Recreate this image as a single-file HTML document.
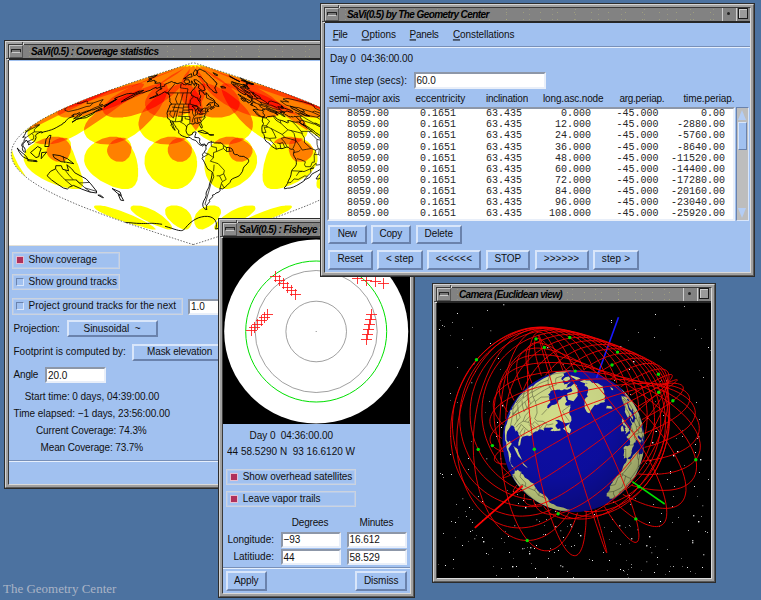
<!DOCTYPE html><html><head><meta charset="utf-8"><title>SaVi</title><style>
html,body{margin:0;padding:0}
body{width:761px;height:600px;overflow:hidden;background:#4c72a0;font-family:"Liberation Sans", Arial, Helvetica, sans-serif;position:relative}
.abs{position:absolute}
.win{position:absolute;box-sizing:border-box;border:1px solid #2c2c2c;background:#a0a0a0;overflow:hidden}
.fr1{position:absolute;left:0;top:0;right:0;bottom:0;border:1px solid;border-color:#d4d4d4 #5a5a5a #5a5a5a #d4d4d4;padding:2px}
.fr2{position:relative;width:100%;height:100%;box-sizing:border-box;border:1px solid;border-color:#3a3a3a #dadada #dadada #3a3a3a}
.nt{position:absolute;background:#444;box-shadow:1px 1px 0 #ddd}
.title{position:relative;height:13px;background:radial-gradient(circle,rgba(200,200,120,.4) .5px,transparent .9px) 3px 1px/17px 7px,radial-gradient(circle,rgba(200,200,120,.3) .5px,transparent .9px) 9px 4px/23px 5px,#828282;border-bottom:2px solid #262626;overflow:hidden;white-space:nowrap}
.tmenu{position:absolute;left:0;top:0;width:14px;height:13px;box-sizing:border-box;border:1px solid;border-color:#c8c8c8 #555 #555 #c8c8c8;background:#8a8a8a}
.tmenu i{position:absolute;left:2px;top:4px;width:8px;height:2px;background:#777;border:1px solid #222;border-bottom-color:#ccc;border-radius:1px;box-sizing:content-box;margin:-1px 0 0 -1px}
.tt{position:absolute;left:22px;top:-0.5px;font:italic bold 10px/14px "Liberation Sans", Arial, Helvetica, sans-serif;color:#000}
.tbtn{position:absolute;top:0;width:14px;height:13px;box-sizing:border-box;border-left:1px solid #cfcfcf;background:#828282}
.tbtn.min{right:14px} .tbtn.max{right:0}
.tbtn.min i{position:absolute;left:4px;top:4px;width:3px;height:3px;border-radius:2px;background:#222}
.tbtn.max i{position:absolute;left:1px;top:0px;width:8px;height:9px;border:1px solid #1a1a1a;background:#9a9a9a;box-shadow:inset 1px 1px 0 #ccc}
.content{position:relative;background:#a1c1f0;overflow:hidden}
.content>div,.content>span,.content>pre{position:absolute;box-sizing:border-box}
.t{white-space:nowrap;line-height:14px;color:#101010}
.btn{border:2px solid;border-color:#d9e6fa #6a82ac #6a82ac #d9e6fa;background:#a1c1f0}
.chk{border:1px solid #ccd3de;background:#a1c1f0;box-shadow:inset 0 0 0 1px #b4cbef}
.ind{border:1px solid;border-color:#6a82ac #d9e6fa #d9e6fa #6a82ac;background:#a1c1f0}
.ind.on{background:#b0305a;border-color:#e6c0d0 #e6c0d0 #e6c0d0 #e6c0d0}
.entry{border:2px solid;border-color:#8d97a8 #e9eff9 #e9eff9 #8d97a8;background:#fff}
.sep{background:#e6effc;border-top:1px solid #7890b8;height:2px !important}
.row{height:12px;font:10px/12px "Liberation Mono","DejaVu Sans Mono",monospace;color:#262626;white-space:pre}
.row span{position:absolute;top:0}
.trough{background:#bdbdbd;border:1px solid;border-color:#6a82ac #d9e6fa #d9e6fa #6a82ac}
.thumb{position:absolute;left:1px;top:14px;width:9px;height:28px;background:#a1c1f0;border:1px solid;border-color:#d9e6fa #6a82ac #6a82ac #d9e6fa;box-sizing:border-box}
.arr{position:absolute;left:1px;width:0;height:0;border-left:4.5px solid transparent;border-right:4.5px solid transparent}
.arr.up{top:2px;border-bottom:10px solid #b4cdf4}
.arr.dn{bottom:2px;border-top:10px solid #b4cdf4}
.gc{position:absolute;left:3px;top:581px;font:13px/16px "Liberation Serif","Times New Roman",serif;color:#aab4c6;white-space:nowrap}
</style></head><body><div class="win" style="left:4px;top:40px;width:380px;height:449px"><div class="fr1"><div class="fr2"><div class="nt" style="left:13px;top:-3px;width:1px;height:3px"></div><div class="nt" style="left:-3px;top:13px;width:3px;height:1px"></div><div class="title"><div class="tmenu"><i></i></div><span id="t50" class="tt" style="left:22px;letter-spacing:-0.483px">SaVi(0.5) : Coverage statistics</span><div class="tbtn min"><i></i></div><div class="tbtn max"><i></i></div></div><div class="content" style="height:424px"><div class="" style="left:0px;top:1px;width:370px;height:185px;background:#fff;border-bottom:1px solid #e6e2d6"><svg class="abs" style="left:0;top:0" width="370" height="184" viewBox="0 0 370 184"><path d="M282.8,145.1 281.5,144.4 276.1,144.4 275.8,144.8 272.1,145.1 262.1,147.8 254.5,150.4 242.5,155.4 231.1,161.1 224.1,165.4 221.5,168.1 221.8,168.4 225.1,168.4 230.1,167.1 231.5,167.1 237.8,165.1 240.1,164.8 242.5,163.8 243.5,163.8 257.8,159.1 270.5,154.1 278.5,150.1 280.5,148.8 282.8,146.4ZM246.1,145.8 245.5,145.1 243.5,144.4 236.1,144.8 229.5,146.8 222.8,149.8 214.1,155.4 208.1,161.1 205.5,165.1 205.1,166.1 205.5,168.1 206.1,168.4 209.5,168.4 212.1,167.8 223.1,163.8 233.5,158.8 240.5,154.4 245.5,149.8 246.5,148.1ZM209.8,146.1 205.8,144.4 200.1,144.4 195.5,145.8 190.5,148.8 186.8,153.1 185.1,158.1 185.5,162.4 187.1,166.1 189.5,168.1 193.8,168.4 199.8,165.8 204.5,162.4 209.1,157.8 211.8,152.8 212.1,151.4 211.8,148.8ZM157.1,147.1 156.1,148.8 156.5,153.4 158.8,157.4 164.1,162.8 168.5,165.8 172.5,167.8 174.8,168.4 178.1,168.4 179.5,167.8 181.1,166.1 182.8,162.4 182.8,157.1 181.5,153.4 180.1,151.4 177.5,148.8 172.5,145.8 167.8,144.4 162.1,144.4 158.1,146.1ZM121.8,145.8 121.5,147.8 122.5,149.8 127.1,154.1 133.5,158.1 145.1,163.8 156.1,167.8 158.8,168.4 162.1,168.4 163.1,167.8 163.1,166.1 161.8,163.4 159.5,160.4 153.1,154.8 145.8,150.1 138.5,146.8 131.8,144.8 124.1,144.4ZM85.1,145.1 85.1,146.4 87.1,148.4 90.1,150.4 96.8,153.8 105.8,157.4 121.5,162.8 122.5,162.8 124.8,163.8 134.1,166.1 135.5,166.8 143.1,168.4 146.5,168.4 146.8,168.1 144.1,165.4 136.5,160.8 124.1,154.8 110.8,149.4 95.8,145.1 94.1,145.1 91.8,144.4 86.5,144.4ZM2.8,88.4 2.5,94.8 3.1,98.1 5.1,102.8 8.8,108.1 15.5,114.8 17.8,116.4 16.8,115.4 9.1,103.4 4.8,94.4ZM13.8,72.1 18.8,69.4 19.1,70.1 18.5,71.8 18.5,73.4 19.5,76.4 21.8,79.1 25.8,81.4 25.1,82.4 21.1,85.1 17.8,88.4 16.5,90.4 14.8,94.4 14.8,99.4 16.8,104.1 18.5,106.4 22.8,110.8 26.8,113.8 32.8,117.4 38.8,120.4 46.8,123.8 52.8,125.8 63.1,128.1 69.5,128.1 72.1,127.1 74.1,124.4 74.1,119.8 73.1,115.4 68.8,102.8 68.1,101.8 64.1,90.4 62.1,86.4 61.8,81.8 61.1,80.1 59.5,78.1 60.1,77.4 61.5,77.1 67.8,73.8 74.8,69.4 75.5,72.4 77.8,76.4 80.8,79.1 85.5,81.4 84.8,82.4 82.8,83.8 79.1,87.4 77.5,89.8 75.5,94.4 75.1,100.1 76.1,103.8 77.8,107.1 80.8,111.1 83.8,114.1 91.5,119.8 103.8,125.8 112.8,128.1 119.1,128.1 123.1,126.8 126.1,124.1 128.5,119.1 128.8,115.8 129.1,115.4 129.1,107.1 128.8,106.8 128.8,104.4 127.5,98.1 125.5,92.1 122.5,86.4 121.8,82.8 120.1,79.8 118.1,78.1 125.8,73.4 130.8,69.4 133.8,74.1 136.1,76.4 140.5,79.4 143.8,80.8 145.1,81.8 139.8,87.1 136.8,92.4 135.8,95.4 135.5,102.8 136.8,107.8 138.8,111.8 143.1,117.4 149.5,122.8 154.8,125.8 162.5,128.1 168.8,128.1 173.5,126.8 178.5,123.8 181.8,120.4 183.8,117.8 185.8,114.1 187.1,110.4 188.1,105.1 188.1,100.1 187.8,99.8 187.5,96.1 186.1,92.1 184.1,88.1 182.8,86.4 182.5,84.8 181.1,82.1 178.1,78.8 176.8,78.1 182.8,73.8 186.8,69.4 191.8,74.4 194.5,76.4 201.8,80.4 204.1,81.1 204.8,81.8 202.1,84.4 199.8,87.8 196.8,94.1 195.5,99.8 195.5,108.1 197.1,114.8 199.5,119.4 201.5,122.1 205.8,125.8 208.5,127.1 212.1,128.1 218.5,128.1 221.8,127.4 226.5,125.8 231.1,123.4 238.5,118.1 241.5,115.1 245.1,110.1 246.8,106.8 248.1,101.8 247.8,95.1 245.5,89.4 243.1,86.4 241.1,82.4 238.5,79.8 235.8,78.1 236.1,77.4 239.5,74.8 241.5,72.1 242.8,69.4 248.5,73.8 252.8,76.4 259.5,79.8 263.8,81.1 264.5,81.8 261.1,86.1 257.5,94.1 254.8,103.4 254.1,109.1 253.8,109.4 253.8,112.4 253.5,112.8 253.8,119.8 255.5,124.1 258.1,126.8 261.8,128.1 268.1,128.1 273.1,127.1 281.8,124.1 288.8,120.8 298.5,114.4 302.5,110.8 306.5,105.4 308.5,100.1 308.5,95.4 307.5,92.1 306.5,90.1 303.1,86.1 301.5,83.1 298.1,80.1 294.5,78.1 297.5,74.4 298.5,71.8 298.5,69.8 298.8,69.4 304.8,73.1 313.1,77.4 324.1,81.8 322.8,83.4 320.8,87.4 316.8,97.4 316.5,99.1 308.1,119.1 307.5,121.8 307.5,124.8 308.1,126.4 310.1,127.8 311.5,128.1 317.8,128.1 324.8,126.8 337.5,122.8 350.1,117.1 353.1,114.8 361.1,106.4 364.5,100.8 366.1,94.8 365.8,88.4 359.8,81.8 356.8,79.8 353.1,78.1 354.8,75.4 355.1,72.4 353.1,70.4 346.1,65.1 339.5,60.8 329.5,55.1 319.5,50.1 318.8,50.1 303.8,43.1 274.8,31.8 256.1,25.4 255.1,24.8 191.8,4.1 189.8,4.1 189.5,4.4 189.1,4.1 187.1,4.1 186.8,4.4 186.5,4.1 184.5,4.1 184.1,4.4 183.8,4.1 182.1,4.1 181.8,4.4 181.1,4.1 179.5,4.1 179.1,4.4 178.8,4.1 176.8,4.1 113.5,24.8 112.5,25.4 106.8,27.1 105.8,27.8 101.1,29.1 100.1,29.8 83.1,35.8 60.1,45.1 39.1,55.1 32.5,58.8 22.5,65.1Z" fill="#ffff00" fill-rule="evenodd"/><path d="M324.1,81.4 330.8,83.1 339.5,83.4 340.1,85.1 340.1,88.1 340.8,91.1 343.1,96.8 345.8,99.4 348.8,100.8 353.5,100.8 356.8,99.8 359.5,98.4 363.1,95.1 364.5,92.4 364.8,89.4 363.8,86.4 358.1,82.1 352.1,79.1 353.1,78.1 348.8,76.8 344.5,76.8 340.5,75.8 333.1,75.8 328.5,77.4 326.1,79.1ZM264.8,81.4 266.1,82.1 270.8,83.1 279.8,83.4 280.1,83.8 279.8,84.1 279.8,89.4 281.1,94.1 283.5,97.8 285.5,99.4 287.5,100.4 293.5,100.8 297.5,99.4 301.8,96.1 303.8,92.4 304.1,88.4 303.5,86.4 299.5,82.8 293.1,79.1 294.1,78.1 291.8,77.1 286.1,76.8 282.5,75.8 275.1,75.8 269.8,77.4 267.1,79.1ZM205.1,81.4 209.1,82.8 213.1,83.1 213.5,83.4 219.8,83.4 220.1,83.8 219.5,85.4 219.5,91.1 220.5,94.1 222.1,96.8 223.8,98.4 227.5,100.4 233.5,100.8 237.8,99.1 241.5,95.8 243.5,91.4 243.5,87.4 242.5,85.4 238.8,82.1 234.1,79.1 235.5,78.1 233.1,77.1 227.8,76.8 224.1,75.8 217.1,75.8 210.5,77.8ZM145.5,81.4 151.1,83.1 159.8,83.4 160.1,83.8 158.8,87.1 158.8,90.8 159.5,93.1 161.1,96.1 163.5,98.4 168.5,100.8 173.5,100.8 177.5,99.1 181.1,95.4 182.8,91.4 182.8,86.4 178.8,81.8 175.1,79.1 176.8,78.1 174.8,77.1 169.5,76.8 166.1,75.8 158.8,75.8 151.8,77.8ZM86.1,81.4 86.1,81.8 91.1,83.1 99.8,83.4 100.1,83.8 98.8,86.1 98.1,88.4 98.1,90.8 98.8,93.1 99.8,95.1 101.8,97.4 104.1,99.1 107.1,100.4 113.5,100.8 116.1,99.8 120.1,96.1 122.1,91.4 122.5,86.1 119.8,82.4 116.1,79.1 117.8,77.8 115.1,76.8 111.1,76.8 107.8,75.8 100.8,75.8 93.1,77.8ZM26.5,81.4 26.5,81.8 31.5,83.1 39.8,83.4 40.1,83.8 37.8,87.8 37.5,90.4 38.1,93.1 39.5,95.4 41.8,97.8 43.8,99.1 47.1,100.4 53.1,100.8 56.5,99.4 59.1,96.8 61.5,91.4 62.1,86.1 59.8,82.1 57.1,79.1 59.1,78.1 57.8,77.1 52.8,76.8 49.8,75.8 42.8,75.8 34.5,77.8ZM19.1,69.4 49.1,54.4 49.8,54.4 52.1,55.8 55.1,56.4 65.1,56.4 65.5,56.1 67.8,56.1 68.1,55.8 70.1,55.8 75.5,54.8 85.1,52.1 85.8,52.4 79.8,58.1 76.8,62.4 75.1,67.1 75.1,69.4 97.5,54.4 101.1,55.8 104.5,56.4 114.1,56.4 114.5,56.1 116.8,56.1 122.1,55.1 131.8,52.1 132.5,52.4 130.8,55.8 129.5,61.4 129.5,64.1 130.8,69.4 133.8,67.1 141.8,59.1 145.5,54.4 149.8,55.8 153.5,56.1 153.8,56.4 163.5,56.4 171.8,54.8 178.5,52.1 179.1,52.4 179.5,55.1 181.1,60.4 183.1,64.4 186.8,69.4 189.1,66.4 191.5,62.1 193.8,54.4 202.8,56.4 212.8,56.4 220.8,54.4 225.1,52.1 226.1,52.8 230.8,58.4 237.1,64.8 242.8,69.4 243.8,65.8 243.8,61.1 242.5,56.4 241.8,55.4 242.1,54.4 252.1,56.4 261.8,56.4 268.1,54.8 270.8,53.1 271.5,52.1 272.1,52.1 286.8,62.1 298.5,69.4 298.5,67.1 296.1,61.8 294.5,59.4 289.8,54.8 290.1,54.4 298.5,56.1 301.1,56.1 301.5,56.4 311.1,56.4 315.8,55.1 317.5,53.8 318.1,52.1 318.8,52.1 328.1,56.8 328.8,56.8 346.8,65.8 336.1,58.8 319.5,50.1 318.8,50.1 315.1,48.1 299.8,41.4 274.8,31.8 256.1,25.4 255.1,24.8 193.1,4.4 195.8,5.8 195.5,6.1 190.1,4.4 191.8,6.1 191.1,6.4 187.1,4.4 186.8,5.1 187.1,6.4 186.8,6.8 184.5,4.4 181.8,6.4 181.5,6.1 181.5,4.4 177.5,6.1 177.1,5.8 178.1,4.4 174.5,5.8 173.5,5.4 174.5,4.8 170.1,6.4 169.1,6.4 113.5,24.8 112.5,25.4 93.8,31.8 68.8,41.4 53.5,48.1 49.8,50.1 49.1,50.1 32.5,58.8 21.1,66.1ZM195.5,6.1 195.8,5.8 196.5,6.1 196.1,6.4ZM172.8,5.8 173.1,5.4 173.8,5.8 173.5,6.1Z" fill="#ff8000" fill-rule="evenodd"/><path d="M352.1,79.1 345.5,76.8 343.5,77.1 342.1,77.8 340.8,79.4 339.8,83.4 344.1,82.8 347.5,81.8ZM293.1,79.1 286.8,76.8 284.8,77.1 283.5,77.8 280.8,80.8 280.1,83.4 280.5,83.1 282.8,83.1 288.8,81.4ZM233.8,79.1 228.5,76.8 226.5,77.1 223.8,78.4 221.5,80.8 220.1,83.4 227.1,82.1 230.8,80.8ZM174.8,79.1 170.1,76.8 167.8,77.1 163.5,79.4 160.1,83.4 167.5,82.1 171.5,80.8ZM115.8,79.1 111.8,76.8 109.5,77.1 107.5,77.8 103.5,80.1 100.5,83.4 100.8,83.1 103.1,83.1 107.8,82.1ZM56.8,79.1 54.1,77.1 53.1,76.8 50.8,77.1 47.1,78.4 44.1,80.1 40.5,83.4 40.8,83.1 43.5,83.1 49.5,81.8ZM48.5,52.8 49.5,54.1 51.1,53.8 58.8,49.8 59.5,49.8 78.1,40.8 117.1,27.8 117.5,28.1 111.1,31.4 102.5,37.1 96.5,42.8 94.8,45.8 93.8,46.8 86.5,51.8 93.8,49.4 94.8,52.1 97.1,54.1 98.1,54.1 115.8,41.1 126.5,36.1 127.1,36.1 144.1,27.4 144.5,27.8 139.5,33.4 136.8,38.4 136.1,41.1 136.1,44.4 136.8,46.1 134.8,48.4 132.8,51.8 138.5,49.4 140.8,51.8 144.8,54.1 145.8,54.1 150.5,47.8 154.1,41.1 162.8,34.8 170.8,26.8 171.1,27.1 170.8,27.8 170.8,31.1 171.1,31.4 171.5,34.8 174.1,40.8 178.8,46.1 178.8,51.1 179.1,51.8 183.1,49.4 189.1,52.8 192.8,54.1 193.5,54.1 193.8,53.4 193.8,47.1 192.5,40.8 194.1,38.4 195.8,34.1 196.5,31.1 196.5,27.4 196.8,27.1 202.5,33.1 207.1,37.1 215.1,42.8 220.8,45.8 225.1,51.8 226.1,51.4 228.1,49.4 234.1,52.1 241.5,54.4 238.8,49.8 236.1,46.4 230.5,40.8 229.8,37.4 228.1,34.1 225.5,30.4 222.5,27.4 222.8,27.1 243.5,37.8 244.1,37.8 253.1,42.1 263.5,46.1 271.5,51.8 272.1,51.4 272.8,49.4 279.5,51.8 289.5,54.4 280.1,47.4 272.8,43.1 269.1,41.4 262.8,35.8 254.5,30.4 250.1,28.1 250.5,27.8 291.1,41.8 292.1,41.8 297.5,43.8 298.5,43.8 305.8,46.1 317.8,51.8 318.1,51.4 317.5,49.8 317.8,49.4 318.5,49.8 299.8,41.4 267.5,29.1 262.8,27.8 260.8,26.8 252.8,24.8 251.5,24.8 243.1,22.8 237.8,22.4 235.5,21.1 220.8,15.1 200.5,7.8 213.1,13.4 234.1,21.8 235.8,22.1 236.1,22.4 235.5,23.4 235.8,24.4 238.5,27.4 238.1,27.8 224.5,23.4 219.1,22.4 216.8,22.4 214.1,20.1 206.8,15.1 192.8,7.1 205.1,16.4 214.8,22.4 213.1,23.4 212.5,24.4 212.1,27.4 212.5,27.8 212.1,28.1 207.1,25.4 202.1,23.4 197.8,22.4 195.8,22.4 192.8,15.1 187.1,7.1 187.5,9.8 188.8,14.1 191.1,19.1 193.5,22.4 193.1,22.8 190.8,23.4 188.8,24.8 185.5,28.1 182.5,25.1 180.5,23.8 174.5,22.1 176.5,19.4 178.5,15.8 180.5,10.8 181.1,7.4 175.8,14.1 172.8,19.8 171.8,22.8 170.8,22.8 165.1,24.8 159.1,28.1 157.8,23.8 156.1,22.8 153.5,22.1 168.1,12.8 175.5,7.1 162.8,14.1 150.1,22.8 143.8,24.1 132.8,27.8 132.5,27.4 133.8,26.1 135.1,23.8 134.5,22.8 132.8,22.4 132.5,22.1 132.8,21.8 143.1,18.1 162.1,10.4 167.8,7.8 145.5,15.8 128.8,22.8 120.8,24.1 108.8,27.1 107.5,27.8 106.8,27.8 106.5,27.4 106.8,27.1 105.8,27.8 101.1,29.1 100.1,29.8 83.1,35.8 64.8,43.1 49.8,50.1 49.1,50.1 48.5,51.1ZM249.5,27.8 249.8,27.4 250.5,27.8 250.1,28.1ZM117.1,27.8 117.5,27.4 118.1,27.8 117.8,28.1ZM117.8,27.4 118.1,27.1 118.8,27.4 118.5,27.8Z" fill="#ff4400" fill-rule="evenodd"/><path d="M270.8,30.4 293.5,40.8 294.1,40.8 297.1,42.4 297.8,42.4 300.8,44.1 301.5,44.1 304.5,45.8 317.1,49.4 317.1,49.1 299.8,41.4ZM212.5,28.4 214.1,34.1 217.1,40.1 220.5,45.4 221.5,46.4 228.1,49.4 230.5,45.1 230.5,43.4 230.8,43.1 230.5,40.8 222.5,34.4 217.5,31.1ZM131.5,28.4 115.8,34.8 101.8,41.8 94.5,46.1 93.8,49.4 105.5,45.4 116.5,40.8 125.1,34.1ZM104.5,28.4 97.5,30.4 96.5,31.1 93.8,31.8 80.5,37.1 78.8,37.4 52.8,48.4 63.8,45.4 66.1,44.4 67.1,44.4 76.8,41.1 77.8,41.1ZM239.1,28.1 246.8,34.4 263.1,46.1 272.8,49.4 272.1,45.8 270.1,42.4 268.8,41.1 255.8,34.8ZM185.5,28.1 182.5,32.8 179.8,39.8 178.8,46.1 183.1,49.4 186.8,47.1 192.5,41.1 191.1,37.1 189.1,33.1ZM158.8,28.1 147.8,35.4 144.1,38.4 137.1,45.4 136.8,46.8 138.5,49.4 146.5,45.8 154.5,40.8 156.8,35.8 158.1,31.8 158.5,28.4ZM236.8,22.4 236.8,22.8 246.1,26.1 238.5,22.4ZM215.1,22.8 221.5,26.4 217.1,22.4 215.5,22.4ZM193.5,22.8 196.5,26.8 195.8,22.4ZM174.5,22.4 171.8,22.8 171.1,26.4ZM152.8,22.4 150.1,22.8 145.5,26.8ZM131.5,22.4 128.5,22.8 121.5,26.1Z" fill="#ff1400" fill-rule="evenodd"/><path d="M205.5,44.6 205.7,40.5 207.0,42.5 209.1,43.6 210.0,45.4 207.7,45.1 205.5,44.6M166.7,21.8 168.0,22.8 171.2,21.8 172.2,21.8 173.7,22.3 174.8,23.8 175.3,23.5 176.7,23.8 177.6,23.3 178.4,23.0 179.8,23.8 181.3,23.3 182.0,24.3 182.3,23.3 182.9,22.3 182.3,21.3 182.4,20.0 182.9,19.8 183.3,20.8 183.6,21.8 184.1,22.8 185.0,23.3 185.1,24.3 185.7,24.3 185.9,22.3 187.1,22.0 187.4,23.3 187.5,24.9 186.7,25.7 185.9,25.9 185.8,27.4 185.2,27.9 184.1,28.4 183.1,29.9 182.3,30.9 181.8,32.9 182.7,33.4 182.9,35.0 184.3,35.0 185.4,35.7 187.2,36.7 188.6,36.8 189.2,39.0 189.9,40.0 190.9,40.5 191.2,39.5 190.8,37.5 191.7,36.0 191.6,34.5 190.3,33.1 190.6,31.9 189.9,29.6 191.1,29.6 192.1,29.9 193.4,30.9 194.1,30.9 195.0,32.9 196.3,33.7 196.8,32.9 197.1,31.6 198.8,33.4 200.2,35.5 202.0,37.0 203.4,37.5 205.0,39.0 205.6,40.0 205.1,40.5 204.2,41.5 202.4,41.8 200.5,41.8 199.5,42.8 198.5,44.1 197.7,45.1 199.0,43.3 200.9,43.1 201.5,43.6 201.4,44.6 202.1,45.8 204.0,46.3 204.3,45.1 205.4,46.1 204.9,46.8 203.4,47.6 201.9,48.6 201.6,47.6 202.4,46.6 200.7,47.1 199.6,48.1 198.7,48.6 198.6,49.6 199.4,50.4 198.3,50.7 196.9,51.1 196.6,51.6 196.8,52.7 196.0,53.7 195.6,55.0 196.0,56.6 195.1,57.7 194.0,58.4 192.8,59.9 191.8,61.3 192.0,62.8 192.8,64.3 193.3,65.8 193.0,67.1 192.1,66.8 191.0,64.8 190.7,63.3 189.6,62.3 188.2,62.5 186.9,61.9 185.2,62.1 184.7,63.1 183.4,63.0 181.2,62.6 179.9,63.1 178.0,64.5 177.5,66.8 177.0,69.8 177.7,71.9 178.6,73.4 180.0,74.2 181.9,73.9 183.3,73.4 183.8,71.6 185.7,70.9 187.1,71.1 186.7,72.9 186.2,74.4 185.8,76.4 188.2,76.6 190.1,76.9 190.9,77.9 190.5,80.5 190.8,82.0 192.3,83.5 194.3,83.3 195.3,83.0 196.8,84.0 197.0,85.0 196.0,84.0 194.8,83.7 193.8,85.2 192.3,84.3 190.8,84.0 189.3,82.5 188.5,81.5 186.8,79.5 185.8,79.2 183.3,78.4 181.4,76.9 179.9,76.2 178.0,76.7 175.6,75.7 173.2,74.9 170.9,73.4 169.6,71.9 169.8,69.8 168.6,68.3 167.0,66.5 166.4,64.8 164.8,63.3 164.4,61.3 163.1,60.5 162.8,62.3 163.9,63.8 164.4,65.8 165.4,67.8 166.2,69.3 165.3,68.8 164.1,67.3 163.1,65.5 162.0,64.3 162.7,62.8 161.6,61.8 161.3,59.7 160.4,58.2 158.9,57.7 158.3,55.7 158.4,54.2 158.0,52.2 158.7,49.6 160.4,46.1 161.0,43.8 162.1,43.9 162.7,43.1 161.9,42.0 160.8,41.0 160.9,39.5 160.8,37.5 160.5,36.5 160.7,34.5 160.0,33.4 159.7,32.4 158.5,31.9 157.0,31.9 156.6,30.9 155.4,30.9 152.6,32.6 150.0,34.0 147.7,35.0 145.6,36.0 142.8,37.0 140.6,37.5 143.6,36.0 147.1,34.5 148.9,33.1 147.5,33.2 147.4,32.4 147.2,31.4 148.5,29.9 150.1,28.9 152.8,27.9 153.0,27.4 151.2,27.4 151.7,26.3 154.3,25.4 155.3,25.4 155.7,24.3 155.7,23.5 158.5,22.3 160.7,21.3 162.7,20.5 163.7,21.0 164.5,21.5 166.7,21.8M187.8,13.5 188.4,12.2 188.3,10.7 188.5,9.7 189.1,9.4 189.6,9.2 189.8,8.7 190.0,8.2 190.6,8.2 191.2,8.2 192.2,8.7 193.3,9.2 195.1,10.2 196.0,10.2 197.1,11.7 199.4,13.7 201.7,15.8 202.9,17.3 205.0,18.8 205.2,19.8 207.3,21.3 206.8,21.8 208.0,22.3 208.0,23.3 207.0,23.8 206.8,24.9 206.7,26.1 205.6,26.6 206.4,28.4 207.2,30.4 208.1,31.9 207.1,31.9 205.0,31.1 203.0,29.4 201.1,27.4 199.0,25.4 198.0,23.3 198.1,22.3 196.5,21.3 195.4,19.8 194.1,18.3 192.5,16.5 191.1,15.6 189.7,15.8 188.6,14.7 187.8,13.5M187.3,18.8 188.7,19.8 190.2,20.8 192.3,22.8 194.6,24.9 196.2,28.9 193.8,29.9 191.5,28.4 189.4,26.9 190.0,23.8 187.9,22.8 186.0,21.8 184.9,18.8 186.1,18.8 187.3,18.8M176.0,18.8 177.3,18.8 178.6,18.8 179.9,18.8 180.8,21.8 179.0,22.3 177.1,22.8 176.0,21.8 175.1,20.8 176.0,18.8M184.3,11.7 185.1,10.7 185.7,9.7 186.1,8.7 186.8,9.0 187.5,9.4 188.2,9.7 188.2,11.0 187.9,12.4 187.5,13.7 186.6,14.1 185.7,14.4 184.8,14.7 184.3,11.7M174.5,17.8 177.5,15.8 178.8,14.7 180.1,13.7 181.3,13.2 182.4,12.7 183.1,15.8 181.8,16.0 180.5,16.3 179.1,16.8 177.5,17.3 176.1,17.5 174.5,17.8M197.0,85.0 198.3,83.5 199.2,81.7 201.2,81.2 202.4,80.2 202.7,81.5 204.1,81.0 205.7,82.0 208.2,81.9 210.1,82.0 212.1,81.8 213.2,83.0 214.3,84.0 215.9,85.5 217.5,86.5 219.5,86.5 221.5,87.0 223.1,88.0 224.2,90.6 224.7,92.6 226.3,93.6 228.3,93.6 230.3,95.1 232.8,95.4 234.8,95.4 236.7,96.6 238.7,97.7 239.6,99.2 239.6,100.7 238.6,102.2 236.8,104.2 235.0,105.7 234.1,107.8 233.5,110.3 231.8,112.8 230.2,114.8 228.0,115.9 225.9,116.7 223.8,117.6 222.0,118.9 221.0,121.4 218.5,123.9 216.7,125.5 214.9,127.0 213.3,128.0 211.8,127.5 210.9,127.0 211.1,129.5 209.7,131.2 207.1,132.0 205.6,133.5 203.4,134.1 203.7,135.6 202.1,137.6 200.1,139.1 200.7,140.6 199.1,142.6 197.7,144.2 197.5,145.7 197.1,148.0 198.2,148.2 196.4,148.5 195.0,147.2 194.1,145.7 193.7,143.2 194.6,140.1 196.3,137.1 197.2,134.6 197.1,132.0 198.1,129.5 200.0,126.0 200.5,122.9 202.0,118.9 202.8,114.8 203.2,111.3 201.7,109.8 198.9,108.3 197.6,106.2 196.7,104.2 195.3,101.2 194.3,99.2 193.1,97.7 194.1,95.6 193.4,93.6 194.4,92.1 195.4,91.1 195.9,89.6 197.1,88.6 196.9,86.5 197.0,85.0M253.3,56.2 252.1,55.4 250.7,55.0 249.8,55.2 248.6,53.7 247.8,53.5 246.3,51.1 244.0,49.1 244.2,48.4 246.3,48.6 247.8,48.7 249.1,48.7 248.1,47.4 246.7,46.1 244.6,44.9 242.3,44.2 241.4,43.6 242.2,43.3 243.3,43.4 242.0,42.3 242.7,42.7 243.5,42.5 243.5,41.8 242.7,41.1 243.1,40.7 242.8,40.0 242.0,39.0 242.2,38.6 242.6,38.4 243.4,38.4 242.6,37.7 241.1,36.7 239.8,36.0 238.4,35.0 238.8,34.8 238.6,34.3 240.3,35.5 241.5,36.5 243.8,37.7 244.6,37.8 245.2,37.6 246.4,38.1 246.8,37.7 247.5,37.2 248.8,37.6 248.7,37.0 245.8,35.2 244.9,34.5 246.4,34.9 245.3,33.8 243.1,32.7 243.8,32.4 244.7,32.3 245.1,32.0 243.3,31.4 242.4,31.6 241.6,32.0 239.5,31.2 237.1,29.9 235.1,28.7 234.4,27.9 233.4,26.9 232.5,26.3 231.3,26.1 231.3,26.4 232.7,27.4 233.8,28.6 234.8,29.6 236.8,30.9 238.0,31.4 239.6,32.1 240.6,33.1 242.2,34.5 243.9,35.8 243.4,36.0 243.4,36.6 241.7,35.5 239.3,34.3 237.0,32.9 236.2,32.6 236.2,33.1 236.5,34.0 234.9,33.4 232.3,31.9 230.1,30.4 229.2,29.6 229.0,29.0 228.6,28.3 228.3,27.7 227.7,26.9 226.5,25.9 224.9,24.7 223.7,23.6 223.2,23.0 222.4,22.1 222.5,21.7 222.4,21.3 222.3,20.8 223.1,20.8 225.6,21.6 228.1,22.4 230.0,22.8 234.2,24.0 236.5,25.1 236.7,25.7 234.7,25.4 233.5,25.2 237.5,26.9 240.4,27.9 240.0,27.4 239.9,26.9 237.8,25.9 237.7,25.5 239.0,25.7 236.3,24.3 233.9,23.3 235.4,23.6 238.2,24.9 237.5,24.2 237.3,23.8 237.3,23.3 238.3,23.5 238.3,23.1 238.7,22.8 237.0,22.0 239.3,22.5 241.7,23.0 243.8,23.6 239.4,22.1 236.0,20.8 232.1,19.1 232.9,19.0 237.0,20.5 241.7,22.3 245.0,23.3 241.2,21.8 235.5,19.8 235.2,19.5 236.8,19.8 236.1,19.3 233.3,18.3 233.4,17.8 230.6,16.8M139.0,16.2 142.1,15.6 144.2,15.2 148.3,14.1 147.2,14.7 146.2,15.6 143.3,16.8 140.0,17.8 139.7,18.1 140.6,18.3 142.9,18.1 140.8,19.3 138.2,20.8 140.3,20.3 141.6,20.3 144.8,19.3 145.9,19.5 145.8,20.3 145.8,20.8 147.4,20.8 145.7,22.1 147.1,22.3 149.4,22.0 150.1,21.8 151.5,22.0 151.7,22.8 151.7,23.8 151.6,25.1 151.5,25.9 149.7,26.6 148.0,27.4 147.1,27.1 147.2,26.4 145.8,26.9 144.5,27.4 141.1,29.4 138.7,30.1 136.3,30.9 133.9,31.9 132.0,31.9 129.1,32.9 126.6,34.2 123.8,36.0 121.4,37.2 117.7,38.8 114.8,40.0 112.2,41.0 114.7,39.0 118.1,37.0 121.8,35.0 124.3,34.0 127.9,32.4 132.7,30.4 134.6,29.4 131.7,30.1 130.1,30.2 125.3,32.4 122.9,32.9 122.6,32.2 119.8,32.6 117.6,32.9 111.9,35.0 106.3,37.0 105.6,38.0 107.0,38.0 105.8,39.0 102.8,40.5 98.4,43.1 93.6,45.1 88.9,47.1 84.1,48.9 82.6,48.9 80.1,49.8 77.2,51.1 73.6,52.4 71.2,54.7 68.6,56.7 66.7,57.2 64.6,57.8 66.0,56.7 68.7,55.2 68.3,54.5 71.2,52.7 71.4,52.2 70.5,51.6 67.2,53.2 66.0,53.0 63.8,53.7 62.8,54.9 64.8,54.7 65.2,55.2 62.0,56.2 59.5,57.2 57.5,59.2 55.9,61.3 53.8,62.3 53.4,63.3 51.3,64.3 47.8,66.3 44.9,67.8 42.4,68.8 39.7,69.6 37.8,70.2 34.7,70.9 32.6,72.1 33.3,70.9 32.0,70.8 29.3,72.1 27.2,73.4 26.6,74.9 27.1,76.4 26.2,78.9 25.1,80.7 22.7,82.0 21.3,83.0 19.4,83.8 19.8,82.5 18.8,81.9 18.6,80.5 17.6,79.8 17.1,79.1 15.9,81.0 14.2,82.5 13.8,84.0 14.2,85.5 15.4,86.5 16.2,88.6 16.1,90.1 16.7,91.2 15.5,91.1 13.9,89.8 13.4,87.5 13.8,86.2 12.6,84.5 13.3,82.5 14.9,80.5 15.4,78.4 16.7,76.4 15.6,75.9 13.7,76.4 15.3,74.4 16.4,72.6 16.5,71.4 17.6,70.1 16.9,69.6M352.3,70.6 350.8,70.9 352.0,72.1 351.1,72.9 351.1,74.4 351.3,75.9 350.1,76.7 351.4,78.9 352.5,81.0 352.8,83.0 352.3,84.0 351.8,84.4 350.3,83.0 348.2,80.8 346.2,78.9 343.5,76.4 340.6,73.9 338.0,71.4 337.2,70.9 336.4,71.7 333.0,70.1 331.1,68.8 328.5,67.6 325.6,67.1 323.0,67.2 320.4,66.9 318.3,66.5 316.3,65.3 314.9,65.7 312.1,64.8 309.2,63.5 306.9,62.3 305.5,62.0 305.7,62.8 308.2,64.3 310.8,65.6 312.2,66.8 314.0,67.8 313.1,66.5 315.3,68.1 317.1,68.1 317.1,66.8 317.3,66.3 319.1,67.8 321.8,68.6 324.2,69.8 324.8,71.4 325.6,73.4 324.9,74.6 324.3,75.4 322.7,76.2 320.5,78.1 319.1,79.2 317.4,79.7 316.0,79.8 314.3,77.9 312.9,75.9 309.7,73.6 306.5,71.6 304.2,69.3 301.6,67.8 298.8,65.8 295.9,64.3 294.3,63.0 295.3,64.3 293.9,63.8 291.7,62.4 290.1,61.1 291.6,61.0 290.5,59.4 288.8,57.5 287.4,56.2 286.3,55.4 285.1,55.4 284.4,56.1 282.0,55.5 281.4,56.0 279.3,55.3 277.7,54.2 276.2,53.5 275.4,52.7 274.3,52.2 274.8,51.8 275.8,51.6 275.0,51.0 276.6,50.8 277.1,50.1 278.4,50.1 280.5,50.8 282.4,51.1 283.9,51.1 283.7,50.5 282.2,49.5 279.6,48.6 277.3,47.8 275.2,47.1 272.2,45.4 273.9,45.8 273.1,44.9 272.2,45.1 271.9,45.9 272.9,46.6 274.4,46.9 274.5,47.4 273.5,47.6 271.2,46.6 271.0,46.1 269.1,45.6 268.6,45.8 269.6,46.9 270.2,47.8 271.8,49.3 272.8,50.1 274.7,50.9 273.6,51.1 273.4,51.4 271.8,51.2 272.4,52.2 271.2,51.8 272.6,52.9 274.9,54.0 274.7,54.5 276.2,55.7 275.2,55.4 273.3,54.5 271.5,53.2 268.5,51.6 267.0,50.4 265.2,49.6 262.4,48.6 259.8,47.4 258.5,46.8 257.7,46.5 257.1,46.8 258.5,47.9 260.4,48.6 262.5,49.8 264.2,50.3 267.1,51.4 268.1,52.0 266.6,51.6 267.4,52.7 268.5,53.2 268.8,54.2 268.5,54.2 267.6,53.2 266.0,52.2 264.4,51.4 261.9,50.6 259.6,49.6 257.5,48.4 255.7,47.7 255.5,48.3 255.2,49.0 253.7,48.7 253.0,48.9 254.3,50.1 254.2,50.8 253.9,51.6 254.3,52.7 255.3,53.4 255.6,54.4 255.5,55.4 253.6,55.5 253.3,56.2M253.3,56.4 257.0,57.0 258.3,55.7 261.2,55.4 264.0,55.0 265.9,55.2 266.8,56.7 268.5,58.2 270.2,59.0 272.8,59.5 274.8,60.2 278.4,61.8 279.6,61.3 278.5,59.7 280.6,59.6 283.2,60.5 286.6,61.3 288.0,61.0 289.7,61.0 291.9,62.6 296.0,65.3 300.2,68.3 303.6,70.9 306.0,73.4 308.2,74.9 310.6,77.1 312.8,78.4 315.6,80.0 316.4,81.0 318.4,81.8 320.2,81.3 322.0,81.0 324.1,80.7 324.5,82.0 324.3,85.5 323.4,88.0 321.7,90.3 319.3,92.6 317.2,94.6 315.4,96.6 314.0,98.7 313.8,101.2 313.5,103.2 312.9,105.7 311.5,108.3 308.2,110.3 305.2,111.8 302.7,113.3 300.7,116.4 296.6,118.4 294.4,120.4 291.2,122.4 287.8,124.4 284.4,126.0 281.1,127.0 278.4,127.2 275.6,127.8 275.1,127.0 276.9,125.0 278.5,122.4 279.3,119.9 281.2,116.4 282.0,113.8 282.4,110.8 283.2,108.8 286.5,105.2 287.4,103.2 287.3,101.2 287.0,98.2 285.3,95.6 284.4,93.4 284.9,91.6 285.1,89.6 283.9,88.0 282.1,88.3 280.5,87.5 279.3,86.2 277.3,86.2 275.8,86.7 273.0,87.7 270.9,87.3 268.9,87.7 267.3,88.2 265.3,87.0 263.1,85.5 261.3,84.0 260.5,82.5 258.7,81.5 256.7,80.0 256.1,78.4 255.2,77.7 255.6,75.9 254.8,73.4 253.2,71.4 252.9,68.8 252.9,66.8 253.2,64.6 254.1,63.8 254.5,62.5 253.5,60.8 253.2,58.9 253.9,58.0 253.3,56.4M38.1,114.8 42.5,118.9 48.1,122.9 54.4,127.0 58.4,128.0 60.5,126.0 64.5,124.4 72.5,128.0 80.7,131.0 87.6,132.0 87.4,130.0 81.8,122.9 77.1,117.9 65.8,111.8 62.7,107.8 57.8,103.7 59.6,109.8 53.7,108.3 52.3,104.7 46.8,104.7 46.6,107.8 41.6,110.3 39.7,112.6 38.1,114.8M239.1,42.0 240.2,41.7 241.0,41.3 242.1,40.8 241.3,40.4 240.5,39.3 239.2,39.0 238.2,38.3 236.3,37.4 234.6,36.3 233.5,36.0 232.1,34.5 231.0,34.3 230.0,33.3 229.1,33.3 230.1,34.5 232.1,36.0 233.7,37.0 234.8,37.2 236.6,38.5 236.1,38.8 237.4,39.7 237.3,40.2 238.9,40.6 238.7,41.0 239.1,42.0M234.1,40.0 236.6,40.0 233.0,37.0 231.9,37.5 234.1,40.0M212.5,26.9 214.6,26.9 216.8,26.9 214.5,25.4 211.7,25.4 212.5,26.9M63.0,61.3 67.8,58.2 73.3,57.2 77.3,56.7 84.4,52.7 86.6,50.6 93.4,48.1 92.1,47.1 83.2,52.2 76.1,55.2 67.8,58.2 63.0,61.3M307.1,117.9 309.8,117.9 315.5,113.3 320.4,108.8 321.8,104.7 314.5,108.8 309.0,114.8 307.1,117.9M103.1,127.5 111.0,131.0 112.4,134.6 108.1,132.0 103.1,127.5M109.3,133.5 112.2,135.1 114.7,139.6 111.6,139.1 109.3,133.5M8.2,87.0 12.0,90.8 16.6,94.6 19.4,98.7 13.7,95.6 10.4,91.3 8.2,87.0M21.5,91.6 27.0,96.6 29.8,95.6 30.6,91.6 32.2,87.5 28.7,85.5 21.5,91.6M18.7,99.7 23.4,100.2 28.1,100.7 27.7,99.7 23.6,99.2 19.4,98.7 18.7,99.7M32.2,97.7 33.9,95.6 37.7,91.1 32.7,91.6 32.2,97.7M43.8,93.6 50.9,94.6 58.4,97.7 64.8,102.7 57.3,101.2 52.1,100.7 45.1,96.6 43.8,93.6M40.1,74.4 42.0,74.4 40.5,79.5 39.8,85.5 35.8,85.5 37.1,78.4 40.1,74.4M353.8,83.0 356.7,85.0 355.8,86.5 354.2,84.5 353.8,83.0M189.0,70.4 193.6,69.3 199.5,72.4 195.7,72.4 189.0,70.4M199.6,73.4 204.9,73.9 201.6,74.4 199.6,73.4M108.2,38.0 101.8,42.0 95.1,46.1 101.1,42.0 108.2,38.0M231.0,20.8 225.3,17.8 222.9,16.3 220.2,14.7 220.7,15.2 221.0,15.8 226.9,18.8 231.0,20.8M205.7,13.7 204.9,12.7 204.0,11.7 208.5,13.7 208.5,14.2 208.4,14.7 205.7,13.7M88.9,134.1 91.2,134.1 94.5,136.6 93.4,136.6 88.9,134.1M282.3,47.1 281.5,45.1 286.5,47.1 295.1,52.2 300.6,55.2 296.6,54.7 290.4,51.1 282.3,47.1M182.9,45.1 187.7,44.6 191.6,48.1 193.8,48.1 191.8,50.1 189.6,50.1 188.6,47.1 186.6,50.1 185.7,47.1 182.9,45.1M156.0,165.3 159.2,166.2 162.3,167.2 165.0,168.1 167.5,168.8 169.5,169.4 171.3,169.6 172.7,169.6 173.9,169.2 174.9,168.5 176.0,167.5 177.1,166.1 178.4,164.6 180.1,162.9 182.0,161.2 184.3,159.5 186.9,158.0 189.7,156.7 192.7,155.9 195.7,155.4 198.5,155.4 201.1,155.8 203.3,156.7 205.1,158.0 206.3,159.5 207.1,161.3 207.4,163.2 207.3,165.0 207.0,166.7 206.7,168.1 209.5,167.3 210.6,167.7 212.2,167.7 214.2,167.5 216.8,167.0 219.9,166.4 223.3,165.6 227.1,164.7 231.0,163.8 234.8,163.1 238.6,162.4 242.1,161.9 245.2,161.5 247.9,161.4 250.3,161.3M116.3,161.4 119.1,161.6 122.0,161.8 124.8,162.1 127.5,162.3 130.1,162.4 132.4,162.5 134.6,162.5 136.7,162.5 138.7,162.4 140.8,162.3 142.9,162.3 145.2,162.4 147.7,162.6 150.3,162.9 153.1,163.3" fill="none" stroke="#000" stroke-width="0.9"/><path d="M162.4,43.1 165.1,43.1 167.7,43.1 170.4,43.1 173.0,43.1 175.7,43.1 178.3,43.1 181.0,43.1 185.0,44.1 188.5,46.1 190.2,49.1 192.4,49.1 195.0,47.1 198.6,47.1 200.2,45.1M166.7,21.8 162.5,26.9 158.5,31.9 160.2,34.0M161.3,59.7 166.2,60.8 170.5,60.5 175.5,63.3 177.9,66.3M158.8,50.1 162.0,50.1 165.3,50.1 168.5,50.1M163.2,46.1 166.0,46.3 168.7,46.6 171.5,46.8 174.3,47.1M166.4,43.1 164.0,50.1M170.4,43.1 169.2,47.5 168.1,51.9 167.1,56.3 166.2,60.8M175.0,43.1 174.2,47.4 173.5,51.6 172.9,55.9 172.3,60.2M161.8,50.1 160.7,53.2 164.4,57.2M166.3,50.1 164.4,57.2M169.8,51.1 173.3,51.3 176.9,51.5 180.5,51.6M169.0,55.2 173.0,55.4 177.0,55.5 181.0,55.7M173.7,55.7 173.2,60.2 170.6,60.2M176.2,55.7 176.0,57.7 180.9,58.7M179.7,43.1 179.9,49.1 180.4,52.2M173.9,49.1 176.9,49.1 179.9,49.1M174.5,46.1 179.7,46.1M181.0,55.7 180.8,62.3M183.6,48.6 183.5,52.2 185.1,55.2 183.5,59.2 183.4,61.3M179.9,48.6 183.6,48.6M186.6,50.1 186.3,54.2M188.1,50.1 188.6,53.2M191.4,50.1 191.7,52.2 188.6,53.2 185.1,55.2M186.0,57.2 189.4,56.7 192.8,56.2 196.1,55.7M185.5,57.2 186.0,61.8M188.4,57.2 188.6,61.3 191.7,61.6M190.1,57.2 192.0,60.2M192.0,52.2 196.0,52.5M192.0,50.1 195.6,50.1 196.9,51.1M196.2,47.1 196.9,51.1M197.9,47.1 198.6,50.1M189.8,53.7 194.5,53.2M169.1,31.9 166.5,38.0 168.4,43.1M174.2,31.9 172.6,37.5 171.0,43.1M178.2,31.9 177.4,37.5 176.7,43.1M181.3,39.0 184.9,35.5M181.0,43.1 181.3,39.0M158.5,31.9 160.7,31.9 162.9,31.9 165.1,31.9 167.3,31.9 169.5,31.9 171.7,31.9 173.9,31.9 176.0,31.9 178.2,31.9 180.3,31.9 182.3,31.9M191.0,41.0 191.5,45.1M172.0,22.8 171.5,26.9 173.3,27.1 175.2,27.4 177.1,27.6 179.0,27.9 178.2,31.9M197.4,31.9 197.6,37.0 201.1,38.5 204.8,40.0M203.5,110.8 204.8,115.9 201.8,122.9 200.5,128.0 199.0,133.0 197.5,138.1 196.0,143.2 198.0,145.2M211.1,127.0 212.9,120.9 217.2,118.4 214.7,112.8 215.3,109.3 209.2,102.7 205.3,101.4 201.3,100.2 204.5,96.6 204.5,91.6 207.5,90.6 214.5,87.5M205.1,103.7 204.6,110.3M210.5,114.8 214.7,112.8M207.7,114.8 210.5,114.8 213.1,119.9M194.4,96.1 199.5,93.1 204.5,96.6M195.4,91.6 199.5,93.1M202.1,81.0 202.4,85.5 207.4,86.5 207.5,90.6M214.3,84.5 214.5,87.5 217.6,90.6 222.7,90.1M217.5,86.5 217.6,90.6M220.5,87.0 220.2,90.1M212.8,122.9 215.0,126.7M253.4,64.8 257.4,64.8 258.4,66.3 255.2,66.3 257.0,71.4 253.2,71.4M257.4,64.8 260.6,60.2 257.2,57.2M257.7,65.3 265.5,69.3 273.2,73.4 276.2,71.1 278.9,68.8 283.7,70.0 288.6,71.2 293.6,72.4 290.5,68.3 287.0,64.3 282.9,60.2M264.2,55.2 267.0,59.2 271.9,62.3 278.9,68.8M271.9,62.3 271.3,59.7M292.1,70.4 295.9,70.4 299.6,70.4 303.4,70.4M292.6,72.4 295.4,76.9 295.5,81.5 302.1,87.5 306.4,89.1 309.3,88.0 311.3,88.0 316.4,88.6 322.5,84.5 316.1,81.0M299.6,70.4 304.0,74.4 307.9,78.4 308.1,83.5 309.3,88.0M307.9,78.4 315.6,80.0M282.0,69.3 285.0,72.4 286.8,79.5 290.4,84.5 293.3,89.1 297.7,88.3 302.1,87.5M273.2,73.4 275.7,76.4 281.2,77.9 286.8,79.5M260.5,77.4 267.1,76.9 264.9,72.1 262.2,67.3M275.7,76.4 272.2,77.4 275.5,81.0 278.2,86.0M286.8,79.5 285.7,83.5 284.0,87.5M255.3,76.4 260.5,77.4 262.4,80.5 266.4,84.5 267.5,88.0M271.9,87.5 270.9,82.5 273.6,81.5 275.8,86.5M268.3,82.0 270.9,82.5M284.4,91.6 289.4,90.6 291.3,89.1M288.0,97.7 291.9,98.7 296.4,100.7 295.5,103.7 296.6,105.7 301.5,105.7 303.3,101.2 305.3,101.2 305.3,97.1 305.1,94.1 306.6,90.6 306.4,89.1M282.9,109.8 288.1,110.0 293.3,110.3 295.0,110.6 300.2,108.3 305.0,106.8 301.5,107.8 307.0,102.2 307.2,104.2 313.5,103.2M301.5,107.8 301.9,111.8 298.7,114.8 297.3,115.3 295.9,114.8 289.3,118.4 285.1,117.9 282.0,121.4 278.9,121.9M287.4,114.8 290.1,110.8 293.3,110.3M298.7,114.8 294.7,119.4M309.7,93.6 313.0,95.6 314.3,97.4M305.6,93.6 309.7,93.6 310.3,88.0M316.4,88.6 316.7,94.1M249.1,48.8 253.6,49.6M245.2,50.1 246.7,50.1 251.3,55.2M243.2,41.0 246.7,42.0 249.3,43.1 250.9,44.6 251.1,45.6 255.2,48.1M246.7,42.0 242.0,38.5M249.3,43.1 253.3,43.6 251.1,41.0 246.4,38.0M250.9,44.6 252.6,44.6 256.3,45.6 257.7,45.3 256.7,44.1 253.3,43.6M251.1,41.0 255.9,42.5 259.3,43.1 256.8,41.0 251.8,38.0 248.7,37.0M256.7,44.1 260.4,44.1 262.1,44.1 267.9,46.6M257.7,45.3 260.9,46.1 264.4,47.6 266.5,48.1 270.9,48.4M266.6,50.1 269.0,51.1 272.1,50.6M251.8,38.0 251.0,36.0 244.9,32.4M259.3,43.1 259.8,40.5 262.1,40.0 269.7,42.5 272.9,45.1M237.4,32.9 234.5,30.9 230.3,28.4 227.5,25.9 224.3,23.3 224.2,22.8 227.5,23.8 229.9,25.9M223.1,20.8 227.4,22.8 233.0,25.9 239.4,28.9 243.1,31.4M275.1,51.1 272.1,50.6M286.7,55.7 290.9,55.2 292.9,55.2 288.8,52.7 286.2,51.1M290.7,59.2 294.3,59.7 292.4,58.2 290.9,55.2M293.9,62.8 295.5,62.3 294.3,59.7 299.9,61.5 305.5,63.3M292.9,55.2 299.6,59.2 305.1,62.3M288.8,52.7 292.0,52.7 295.1,54.2 299.8,54.7 307.8,56.2 315.2,61.3 323.3,66.3M307.8,56.2 310.3,55.2 312.6,54.2 317.5,55.2 323.4,57.2 329.2,60.2 334.0,62.3 343.2,64.3M25.4,64.3 30.6,63.8 25.4,68.3 25.3,70.9 31.9,70.9M315.2,61.3 321.6,62.8 320.0,59.2 315.2,55.7M328.2,67.3 328.0,64.3 324.9,60.2 323.4,57.2M317.5,55.2 311.3,52.2 312.0,50.1 305.8,47.1 305.0,45.1 302.0,43.1M67.9,42.5 72.5,42.0 77.2,40.0 78.6,40.5 77.9,42.5 81.1,42.3 84.2,42.0 94.1,38.5 91.4,42.0 90.3,44.1 93.9,43.6 84.9,47.1 80.3,49.6M57.4,46.6 55.6,49.1 57.4,49.9 59.3,50.6 68.4,48.6 77.1,45.6 80.9,45.1 84.2,42.0M291.8,50.1 295.7,51.1 293.4,48.1 303.3,51.1 311.0,54.7M293.4,48.1 289.5,46.6 284.7,46.1 277.0,44.1 271.5,40.0 275.6,40.5 279.7,41.0 274.0,38.0 276.5,37.7 278.8,37.5 285.9,39.0 294.4,41.0 302.0,43.1M303.3,51.1 305.3,50.1 311.3,52.2M343.2,64.3 345.4,65.8M22.5,66.3 17.4,70.4M30.6,63.8 21.7,68.3 16.7,71.4M17.1,76.4 22.8,72.4 25.3,70.9M22.8,72.4 24.7,74.4 24.7,77.9 18.6,80.5 17.2,78.9M18.6,80.5 21.5,81.5M72.0,52.2 77.6,50.1 80.3,49.6M70.0,54.2 72.3,53.7M54.0,95.2 55.5,101.7M46.6,107.8 49.6,112.0 53.4,116.2 57.9,120.4 63.0,124.7M56.3,109.3 59.9,114.1 64.3,118.9 60.3,118.9 56.2,118.9M67.1,118.9 71.3,122.9 76.2,127.0 81.5,131.0M64.3,118.9 67.1,118.9 70.2,121.9 73.6,121.8 77.0,121.6 80.3,121.4M76.2,127.0 82.1,128.7 88.0,130.5" fill="none" stroke="#000" stroke-width="0.7"/><path d="M184.3,183.6 177.9,181.6 171.6,179.6 165.3,177.5 159.0,175.5 152.7,173.5 146.5,171.5 140.3,169.4 134.1,167.4 128.1,165.4 122.1,163.4 116.1,161.4 110.3,159.3 104.5,157.3 98.9,155.3 93.3,153.3 87.9,151.2 82.5,149.2 77.3,147.2 72.2,145.2 67.3,143.2 62.5,141.1 57.9,139.1 53.4,137.1 49.0,135.1 44.9,133.0 40.9,131.0 37.1,129.0 33.4,127.0 30.0,125.0 26.7,122.9 23.6,120.9 20.7,118.9 18.0,116.9 15.6,114.8 13.3,112.8 11.2,110.8 9.4,108.8 7.7,106.8 6.3,104.7 5.1,102.7 4.1,100.7 3.3,98.7 2.7,96.6 2.4,94.6 2.3,92.6 2.4,90.6 2.7,88.6 3.3,86.5 4.1,84.5 5.1,82.5 6.3,80.5 7.7,78.4 9.4,76.4 11.2,74.4 13.3,72.4 15.6,70.4 18.0,68.3 20.7,66.3 23.6,64.3 26.7,62.3 30.0,60.2 33.4,58.2 37.1,56.2 40.9,54.2 44.9,52.2 49.0,50.1 53.4,48.1 57.9,46.1 62.5,44.1 67.3,42.0 72.2,40.0 77.3,38.0 82.5,36.0 87.9,34.0 93.3,31.9 98.9,29.9 104.5,27.9 110.3,25.9 116.1,23.8 122.1,21.8 128.1,19.8 134.1,17.8 140.3,15.8 146.5,13.7 152.7,11.7 159.0,9.7 165.3,7.7 171.6,5.6 177.9,3.6 184.3,1.6M184.3,183.6 190.7,181.6 197.0,179.6 203.3,177.5 209.6,175.5 215.9,173.5 222.1,171.5 228.3,169.4 234.5,167.4 240.5,165.4 246.5,163.4 252.5,161.4 258.3,159.3 264.1,157.3 269.7,155.3 275.3,153.3 280.7,151.2 286.1,149.2 291.3,147.2 296.4,145.2 301.3,143.2 306.1,141.1 310.7,139.1 315.2,137.1 319.6,135.1 323.7,133.0 327.7,131.0 331.5,129.0 335.2,127.0 338.6,125.0 341.9,122.9 345.0,120.9 347.9,118.9 350.6,116.9 353.0,114.8 355.3,112.8 357.4,110.8 359.2,108.8 360.9,106.8 362.3,104.7 363.5,102.7 364.5,100.7 365.3,98.7 365.9,96.6 366.2,94.6 366.3,92.6 366.2,90.6 365.9,88.6 365.3,86.5 364.5,84.5 363.5,82.5 362.3,80.5 360.9,78.4 359.2,76.4 357.4,74.4 355.3,72.4 353.0,70.4 350.6,68.3 347.9,66.3 345.0,64.3 341.9,62.3 338.6,60.2 335.2,58.2 331.5,56.2 327.7,54.2 323.7,52.2 319.6,50.1 315.2,48.1 310.7,46.1 306.1,44.1 301.3,42.0 296.4,40.0 291.3,38.0 286.1,36.0 280.7,34.0 275.3,31.9 269.7,29.9 264.1,27.9 258.3,25.9 252.5,23.8 246.5,21.8 240.5,19.8 234.5,17.8 228.3,15.8 222.1,13.7 215.9,11.7 209.6,9.7 203.3,7.7 197.0,5.6 190.7,3.6 184.3,1.6" fill="none" stroke="#444" stroke-width="0.8" stroke-dasharray="1.5,1.5"/></svg></div><div class="chk" style="left:2.5px;top:191.5px;width:108.5px;height:17px;"></div><div class="ind on" style="left:6.5px;top:196px;width:8px;height:8px;"></div><span id="t0" class="t " style="left:19.5px;transform:scaleY(1.1);top:192.9px;font-size:10px;letter-spacing:-0.041px;">Show coverage</span><div class="chk" style="left:2.5px;top:213.5px;width:108.5px;height:16.5px;"></div><div class="ind" style="left:6.5px;top:217.75px;width:8px;height:8px;"></div><span id="t1" class="t " style="left:19.5px;transform:scaleY(1.1);top:214.65px;font-size:10px;letter-spacing:0.012px;">Show ground tracks</span><div class="chk" style="left:2.5px;top:238px;width:171.5px;height:16.5px;"></div><div class="ind" style="left:6.5px;top:242.25px;width:8px;height:8px;"></div><span id="t2" class="t " style="left:19.5px;transform:scaleY(1.1);top:239.15px;font-size:10px;letter-spacing:0.006px;">Project ground tracks for the next</span><div class="entry" style="left:179px;top:238.5px;width:72px;height:16px;"></div><span id="t3" class="t " style="left:182px;transform:scaleY(1.1);top:240.2px;font-size:10px;letter-spacing:-0.050px;">1.0</span><span id="t4" class="t " style="left:4.5px;transform:scaleY(1.1);top:262.4px;font-size:10px;letter-spacing:-0.086px;">Projection:</span><div class="btn" style="left:57.5px;top:260.3px;width:91px;height:16.7px;"></div><span id="t5" class="t " style="left:103px;transform:translateX(-50%) scaleY(1.1);top:261.55px;font-size:10px;letter-spacing:-0.042px;">Sinusoidal&nbsp; ~</span><span id="t6" class="t " style="left:4.5px;transform:scaleY(1.1);top:285.4px;font-size:10px;letter-spacing:0.005px;">Footprint is computed by:</span><div class="btn" style="left:122.5px;top:283.6px;width:128.5px;height:17px;"></div><span id="t7" class="t " style="left:138px;transform:scaleY(1.1);top:284.9px;font-size:10px;letter-spacing:-0.107px;">Mask elevation</span><span id="t8" class="t " style="left:4.5px;transform:scaleY(1.1);top:308.4px;font-size:10px;letter-spacing:-0.176px;">Angle</span><div class="entry" style="left:36px;top:307px;width:61px;height:16px;"></div><span id="t9" class="t " style="left:39px;transform:scaleY(1.1);top:308.7px;font-size:10px;letter-spacing:-0.050px;">20.0</span><span id="t10" class="t " style="left:15.7px;transform:scaleY(1.1);top:329.9px;font-size:10px;letter-spacing:-0.055px;">Start time: 0 days, 04:39:00.00</span><span id="t11" class="t " style="left:4.5px;transform:scaleY(1.1);top:346.9px;font-size:10px;letter-spacing:-0.071px;">Time elapsed: −1 days, 23:56:00.00</span><span id="t12" class="t " style="left:27px;transform:scaleY(1.1);top:363.9px;font-size:10px;letter-spacing:-0.122px;">Current Coverage: 74.3%</span><span id="t13" class="t " style="left:31.5px;transform:scaleY(1.1);top:381.4px;font-size:10px;letter-spacing:-0.129px;">Mean Coverage: 73.7%</span><div class="sep" style="left:0px;top:399.5px;width:371px;height:1.5px;"></div></div></div></div></div><div class="win" style="left:432px;top:283px;width:284px;height:300px"><div class="fr1"><div class="fr2"><div class="nt" style="left:13px;top:-3px;width:1px;height:3px"></div><div class="nt" style="left:-3px;top:13px;width:3px;height:1px"></div><div class="title"><div class="tmenu"><i></i></div><span id="t51" class="tt" style="left:22px;letter-spacing:-0.645px">Camera (Euclidean view)</span><div class="tbtn min"><i></i></div><div class="tbtn max"><i></i></div></div><div class="content" style="height:275px"><div class="" style="left:0px;top:-1px;width:274px;height:276px;background:#000"><svg class="abs" style="left:0;top:0" width="274" height="276" viewBox="0 0 274 276"><defs><radialGradient id="gsh" cx="0.36" cy="0.34" r="0.75"><stop offset="0" stop-color="#000" stop-opacity="0"/><stop offset="0.55" stop-color="#000" stop-opacity="0.05"/><stop offset="1" stop-color="#000" stop-opacity="0.33"/></radialGradient><clipPath id="gcl"><circle cx="136.5" cy="139.0" r="71.0"/></clipPath></defs><rect width="274" height="276" fill="#000"/><rect x="21" y="215" width="1.0" height="1.0" fill="rgb(80,80,80)"/><rect x="148" y="276" width="1.0" height="1.0" fill="rgb(80,80,80)"/><rect x="220" y="171" width="1.0" height="1.0" fill="rgb(140,140,140)"/><rect x="190" y="95" width="1.0" height="1.0" fill="rgb(235,235,235)"/><rect x="70" y="147" width="1.0" height="1.0" fill="rgb(100,100,100)"/><rect x="53" y="28" width="1.4" height="1.4" fill="rgb(80,80,80)"/><rect x="261" y="219" width="1.4" height="1.4" fill="rgb(235,235,235)"/><rect x="157" y="76" width="1.0" height="1.0" fill="rgb(100,100,100)"/><rect x="180" y="102" width="1.0" height="1.0" fill="rgb(180,180,180)"/><rect x="113" y="246" width="1.0" height="1.0" fill="rgb(140,140,140)"/><rect x="174" y="144" width="1.4" height="1.4" fill="rgb(235,235,235)"/><rect x="25" y="196" width="1.4" height="1.4" fill="rgb(80,80,80)"/><rect x="187" y="182" width="1.0" height="1.0" fill="rgb(80,80,80)"/><rect x="64" y="266" width="1.0" height="1.0" fill="rgb(140,140,140)"/><rect x="230" y="177" width="1.0" height="1.0" fill="rgb(180,180,180)"/><rect x="109" y="217" width="1.0" height="1.0" fill="rgb(140,140,140)"/><rect x="212" y="220" width="1.0" height="1.0" fill="rgb(235,235,235)"/><rect x="213" y="245" width="1.0" height="1.0" fill="rgb(140,140,140)"/><rect x="65" y="103" width="1.4" height="1.4" fill="rgb(235,235,235)"/><rect x="48" y="110" width="1.0" height="1.0" fill="rgb(80,80,80)"/><rect x="176" y="137" width="1.4" height="1.4" fill="rgb(100,100,100)"/><rect x="200" y="227" width="1.4" height="1.4" fill="rgb(80,80,80)"/><rect x="107" y="223" width="1.0" height="1.0" fill="rgb(100,100,100)"/><rect x="111" y="256" width="1.0" height="1.0" fill="rgb(180,180,180)"/><rect x="149" y="199" width="1.0" height="1.0" fill="rgb(235,235,235)"/><rect x="134" y="61" width="1.0" height="1.0" fill="rgb(180,180,180)"/><rect x="72" y="146" width="1.0" height="1.0" fill="rgb(180,180,180)"/><rect x="121" y="199" width="1.0" height="1.0" fill="rgb(140,140,140)"/><rect x="182" y="223" width="1.4" height="1.4" fill="rgb(180,180,180)"/><rect x="127" y="107" width="1.0" height="1.0" fill="rgb(80,80,80)"/><rect x="99" y="275" width="1.0" height="1.0" fill="rgb(235,235,235)"/><rect x="117" y="250" width="1.0" height="1.0" fill="rgb(180,180,180)"/><rect x="258" y="271" width="1.0" height="1.0" fill="rgb(80,80,80)"/><rect x="51" y="252" width="1.0" height="1.0" fill="rgb(100,100,100)"/><rect x="33" y="229" width="1.0" height="1.0" fill="rgb(235,235,235)"/><rect x="20" y="100" width="1.0" height="1.0" fill="rgb(100,100,100)"/><rect x="143" y="233" width="1.4" height="1.4" fill="rgb(235,235,235)"/><rect x="97" y="246" width="1.0" height="1.0" fill="rgb(235,235,235)"/><rect x="217" y="35" width="1.0" height="1.0" fill="rgb(180,180,180)"/><rect x="258" y="150" width="1.0" height="1.0" fill="rgb(235,235,235)"/><rect x="66" y="2" width="1.4" height="1.4" fill="rgb(140,140,140)"/><rect x="240" y="149" width="1.4" height="1.4" fill="rgb(235,235,235)"/><rect x="262" y="117" width="1.0" height="1.0" fill="rgb(140,140,140)"/><rect x="209" y="243" width="1.4" height="1.4" fill="rgb(235,235,235)"/><rect x="245" y="128" width="1.0" height="1.0" fill="rgb(80,80,80)"/><rect x="188" y="225" width="1.0" height="1.0" fill="rgb(100,100,100)"/><rect x="83" y="188" width="1.0" height="1.0" fill="rgb(140,140,140)"/><rect x="71" y="234" width="1.0" height="1.0" fill="rgb(235,235,235)"/><rect x="25" y="243" width="1.0" height="1.0" fill="rgb(235,235,235)"/><rect x="16" y="257" width="1.0" height="1.0" fill="rgb(235,235,235)"/><rect x="161" y="161" width="1.0" height="1.0" fill="rgb(235,235,235)"/><rect x="270" y="230" width="1.0" height="1.0" fill="rgb(180,180,180)"/><rect x="90" y="245" width="1.0" height="1.0" fill="rgb(100,100,100)"/><rect x="116" y="175" width="1.0" height="1.0" fill="rgb(100,100,100)"/><rect x="61" y="56" width="1.0" height="1.0" fill="rgb(235,235,235)"/><rect x="113" y="193" width="1.0" height="1.0" fill="rgb(140,140,140)"/><rect x="98" y="202" width="1.0" height="1.0" fill="rgb(140,140,140)"/><rect x="29" y="214" width="1.0" height="1.0" fill="rgb(180,180,180)"/><rect x="209" y="259" width="1.4" height="1.4" fill="rgb(80,80,80)"/><rect x="3" y="18" width="1.0" height="1.0" fill="rgb(80,80,80)"/><rect x="141" y="120" width="1.0" height="1.0" fill="rgb(80,80,80)"/><rect x="191" y="275" width="1.0" height="1.0" fill="rgb(80,80,80)"/><rect x="93" y="186" width="1.0" height="1.0" fill="rgb(235,235,235)"/><rect x="187" y="116" width="1.4" height="1.4" fill="rgb(80,80,80)"/><rect x="31" y="239" width="1.0" height="1.0" fill="rgb(100,100,100)"/><rect x="14" y="219" width="1.0" height="1.0" fill="rgb(180,180,180)"/><rect x="261" y="134" width="1.4" height="1.4" fill="rgb(180,180,180)"/><rect x="230" y="247" width="1.0" height="1.0" fill="rgb(140,140,140)"/><rect x="140" y="129" width="1.0" height="1.0" fill="rgb(235,235,235)"/><rect x="201" y="30" width="1.0" height="1.0" fill="rgb(140,140,140)"/><rect x="156" y="93" width="1.4" height="1.4" fill="rgb(80,80,80)"/><rect x="123" y="263" width="1.4" height="1.4" fill="rgb(140,140,140)"/><rect x="108" y="232" width="1.0" height="1.0" fill="rgb(235,235,235)"/><rect x="175" y="217" width="1.0" height="1.0" fill="rgb(180,180,180)"/><rect x="177" y="78" width="1.0" height="1.0" fill="rgb(180,180,180)"/><rect x="258" y="27" width="1.0" height="1.0" fill="rgb(140,140,140)"/><rect x="132" y="215" width="1.0" height="1.0" fill="rgb(100,100,100)"/><rect x="92" y="251" width="1.4" height="1.4" fill="rgb(235,235,235)"/><rect x="96" y="104" width="1.0" height="1.0" fill="rgb(140,140,140)"/><rect x="110" y="275" width="1.0" height="1.0" fill="rgb(235,235,235)"/><rect x="220" y="262" width="1.0" height="1.0" fill="rgb(140,140,140)"/><rect x="241" y="215" width="1.0" height="1.0" fill="rgb(140,140,140)"/><rect x="271" y="177" width="1.0" height="1.0" fill="rgb(180,180,180)"/><rect x="99" y="243" width="1.0" height="1.0" fill="rgb(235,235,235)"/><rect x="206" y="61" width="1.4" height="1.4" fill="rgb(100,100,100)"/><rect x="38" y="69" width="1.0" height="1.0" fill="rgb(180,180,180)"/><rect x="233" y="169" width="1.0" height="1.0" fill="rgb(235,235,235)"/><rect x="114" y="212" width="1.0" height="1.0" fill="rgb(80,80,80)"/><rect x="113" y="193" width="1.0" height="1.0" fill="rgb(100,100,100)"/><rect x="37" y="236" width="1.4" height="1.4" fill="rgb(100,100,100)"/><rect x="34" y="139" width="1.0" height="1.0" fill="rgb(100,100,100)"/><rect x="20" y="65" width="1.0" height="1.0" fill="rgb(140,140,140)"/><rect x="191" y="267" width="1.0" height="1.0" fill="rgb(80,80,80)"/><rect x="263" y="157" width="1.4" height="1.4" fill="rgb(235,235,235)"/><rect x="233" y="264" width="1.0" height="1.0" fill="rgb(100,100,100)"/><rect x="31" y="167" width="1.0" height="1.0" fill="rgb(180,180,180)"/><rect x="136" y="275" width="1.0" height="1.0" fill="rgb(180,180,180)"/><rect x="247" y="4" width="1.0" height="1.0" fill="rgb(180,180,180)"/><rect x="134" y="244" width="1.0" height="1.0" fill="rgb(180,180,180)"/><rect x="193" y="224" width="1.0" height="1.0" fill="rgb(80,80,80)"/><rect x="204" y="268" width="1.0" height="1.0" fill="rgb(100,100,100)"/><rect x="147" y="171" width="1.0" height="1.0" fill="rgb(235,235,235)"/><rect x="128" y="243" width="1.0" height="1.0" fill="rgb(80,80,80)"/><rect x="143" y="196" width="1.0" height="1.0" fill="rgb(180,180,180)"/><rect x="236" y="194" width="1.0" height="1.0" fill="rgb(140,140,140)"/><rect x="49" y="251" width="1.0" height="1.0" fill="rgb(235,235,235)"/><rect x="212" y="234" width="1.4" height="1.4" fill="rgb(235,235,235)"/><rect x="136" y="75" width="1.0" height="1.0" fill="rgb(80,80,80)"/><rect x="18" y="220" width="1.0" height="1.0" fill="rgb(235,235,235)"/><rect x="181" y="49" width="1.0" height="1.0" fill="rgb(140,140,140)"/><rect x="31" y="156" width="1.0" height="1.0" fill="rgb(235,235,235)"/><rect x="193" y="92" width="1.0" height="1.0" fill="rgb(180,180,180)"/><rect x="193" y="202" width="1.0" height="1.0" fill="rgb(140,140,140)"/><rect x="216" y="202" width="1.0" height="1.0" fill="rgb(180,180,180)"/><rect x="67" y="240" width="1.0" height="1.0" fill="rgb(100,100,100)"/><rect x="217" y="270" width="1.0" height="1.0" fill="rgb(235,235,235)"/><rect x="116" y="64" width="1.0" height="1.0" fill="rgb(80,80,80)"/><rect x="72" y="250" width="1.0" height="1.0" fill="rgb(235,235,235)"/><rect x="98" y="266" width="1.0" height="1.0" fill="rgb(235,235,235)"/><rect x="15" y="20" width="1.0" height="1.0" fill="rgb(140,140,140)"/><rect x="135" y="163" width="1.0" height="1.0" fill="rgb(235,235,235)"/><rect x="209" y="161" width="1.0" height="1.0" fill="rgb(100,100,100)"/><rect x="174" y="62" width="1.0" height="1.0" fill="rgb(140,140,140)"/><rect x="75" y="264" width="1.4" height="1.4" fill="rgb(235,235,235)"/><rect x="59" y="273" width="1.0" height="1.0" fill="rgb(140,140,140)"/><rect x="77" y="223" width="1.4" height="1.4" fill="rgb(100,100,100)"/><rect x="45" y="218" width="1.0" height="1.0" fill="rgb(235,235,235)"/><rect x="214" y="250" width="1.4" height="1.4" fill="rgb(80,80,80)"/><rect x="36" y="61" width="1.4" height="1.4" fill="rgb(180,180,180)"/><rect x="141" y="36" width="1.0" height="1.0" fill="rgb(80,80,80)"/><rect x="33" y="217" width="1.0" height="1.0" fill="rgb(140,140,140)"/><rect x="268" y="229" width="1.0" height="1.0" fill="rgb(180,180,180)"/><rect x="84" y="95" width="1.0" height="1.0" fill="rgb(100,100,100)"/><rect x="173" y="110" width="1.0" height="1.0" fill="rgb(140,140,140)"/><rect x="63" y="67" width="1.0" height="1.0" fill="rgb(100,100,100)"/><rect x="64" y="236" width="1.0" height="1.0" fill="rgb(140,140,140)"/><rect x="250" y="265" width="1.0" height="1.0" fill="rgb(235,235,235)"/><rect x="183" y="44" width="1.4" height="1.4" fill="rgb(180,180,180)"/><rect x="183" y="267" width="1.0" height="1.0" fill="rgb(235,235,235)"/><rect x="88" y="205" width="1.4" height="1.4" fill="rgb(235,235,235)"/><rect x="18" y="235" width="1.0" height="1.0" fill="rgb(100,100,100)"/><rect x="148" y="144" width="1.0" height="1.0" fill="rgb(140,140,140)"/><rect x="157" y="212" width="1.0" height="1.0" fill="rgb(235,235,235)"/><rect x="126" y="143" width="1.0" height="1.0" fill="rgb(80,80,80)"/><rect x="192" y="223" width="1.0" height="1.0" fill="rgb(140,140,140)"/><rect x="70" y="188" width="1.0" height="1.0" fill="rgb(100,100,100)"/><rect x="174" y="20" width="1.0" height="1.0" fill="rgb(180,180,180)"/><rect x="46" y="239" width="1.4" height="1.4" fill="rgb(235,235,235)"/><rect x="218" y="99" width="1.0" height="1.0" fill="rgb(100,100,100)"/><rect x="239" y="136" width="1.0" height="1.0" fill="rgb(100,100,100)"/><rect x="81" y="201" width="1.0" height="1.0" fill="rgb(180,180,180)"/><rect x="191" y="38" width="1.0" height="1.0" fill="rgb(80,80,80)"/><rect x="171" y="185" width="1.0" height="1.0" fill="rgb(180,180,180)"/><rect x="126" y="235" width="1.0" height="1.0" fill="rgb(235,235,235)"/><rect x="112" y="249" width="1.0" height="1.0" fill="rgb(180,180,180)"/><rect x="255" y="238" width="1.4" height="1.4" fill="rgb(180,180,180)"/><rect x="133" y="116" width="1.0" height="1.0" fill="rgb(100,100,100)"/><rect x="16" y="266" width="1.0" height="1.0" fill="rgb(100,100,100)"/><rect x="224" y="211" width="1.0" height="1.0" fill="rgb(180,180,180)"/><rect x="265" y="265" width="1.0" height="1.0" fill="rgb(235,235,235)"/><rect x="220" y="255" width="1.0" height="1.0" fill="rgb(235,235,235)"/><rect x="210" y="116" width="1.0" height="1.0" fill="rgb(180,180,180)"/><rect x="226" y="113" width="1.0" height="1.0" fill="rgb(180,180,180)"/><rect x="93" y="137" width="1.4" height="1.4" fill="rgb(235,235,235)"/><rect x="218" y="244" width="1.0" height="1.0" fill="rgb(80,80,80)"/><rect x="174" y="18" width="1.0" height="1.0" fill="rgb(235,235,235)"/><rect x="150" y="169" width="1.4" height="1.4" fill="rgb(80,80,80)"/><rect x="152" y="257" width="1.0" height="1.0" fill="rgb(140,140,140)"/><rect x="176" y="200" width="1.0" height="1.0" fill="rgb(180,180,180)"/><rect x="260" y="194" width="1.0" height="1.0" fill="rgb(100,100,100)"/><rect x="172" y="258" width="1.0" height="1.0" fill="rgb(235,235,235)"/><rect x="172" y="237" width="1.0" height="1.0" fill="rgb(80,80,80)"/><rect x="69" y="140" width="1.0" height="1.0" fill="rgb(140,140,140)"/><rect x="213" y="158" width="1.4" height="1.4" fill="rgb(180,180,180)"/><rect x="28" y="209" width="1.0" height="1.0" fill="rgb(100,100,100)"/><rect x="170" y="268" width="1.0" height="1.0" fill="rgb(100,100,100)"/><rect x="223" y="219" width="1.0" height="1.0" fill="rgb(235,235,235)"/><rect x="78" y="164" width="1.0" height="1.0" fill="rgb(235,235,235)"/><rect x="196" y="59" width="1.4" height="1.4" fill="rgb(235,235,235)"/><rect x="126" y="62" width="1.0" height="1.0" fill="rgb(100,100,100)"/><rect x="215" y="140" width="1.4" height="1.4" fill="rgb(235,235,235)"/><rect x="218" y="129" width="1.0" height="1.0" fill="rgb(140,140,140)"/><rect x="52" y="99" width="1.0" height="1.0" fill="rgb(140,140,140)"/><rect x="255" y="240" width="1.4" height="1.4" fill="rgb(180,180,180)"/><rect x="133" y="222" width="1.4" height="1.4" fill="rgb(180,180,180)"/><rect x="236" y="153" width="1.4" height="1.4" fill="rgb(235,235,235)"/><rect x="13" y="33" width="1.0" height="1.0" fill="rgb(80,80,80)"/><rect x="247" y="163" width="1.0" height="1.0" fill="rgb(100,100,100)"/><rect x="209" y="243" width="1.0" height="1.0" fill="rgb(180,180,180)"/><rect x="76" y="171" width="1.4" height="1.4" fill="rgb(140,140,140)"/><rect x="219" y="129" width="1.0" height="1.0" fill="rgb(235,235,235)"/><rect x="214" y="166" width="1.0" height="1.0" fill="rgb(80,80,80)"/><rect x="253" y="269" width="1.0" height="1.0" fill="rgb(140,140,140)"/><rect x="1" y="262" width="1.0" height="1.0" fill="rgb(80,80,80)"/><rect x="86" y="198" width="1.0" height="1.0" fill="rgb(235,235,235)"/><rect x="5" y="23" width="1.0" height="1.0" fill="rgb(180,180,180)"/><rect x="224" y="78" width="1.0" height="1.0" fill="rgb(140,140,140)"/><rect x="190" y="272" width="1.0" height="1.0" fill="rgb(140,140,140)"/><rect x="35" y="220" width="1.0" height="1.0" fill="rgb(180,180,180)"/><rect x="222" y="224" width="1.0" height="1.0" fill="rgb(100,100,100)"/><rect x="155" y="258" width="1.0" height="1.0" fill="rgb(235,235,235)"/><rect x="187" y="269" width="1.0" height="1.0" fill="rgb(80,80,80)"/><rect x="165" y="91" width="1.0" height="1.0" fill="rgb(140,140,140)"/><rect x="35" y="25" width="1.0" height="1.0" fill="rgb(100,100,100)"/><rect x="84" y="152" width="1.0" height="1.0" fill="rgb(140,140,140)"/><rect x="53" y="41" width="1.0" height="1.0" fill="rgb(235,235,235)"/><rect x="137" y="219" width="1.0" height="1.0" fill="rgb(100,100,100)"/><rect x="6" y="175" width="1.0" height="1.0" fill="rgb(140,140,140)"/><rect x="7" y="24" width="1.0" height="1.0" fill="rgb(140,140,140)"/><rect x="266" y="75" width="1.0" height="1.0" fill="rgb(180,180,180)"/><rect x="256" y="213" width="1.4" height="1.4" fill="rgb(180,180,180)"/><rect x="157" y="182" width="1.4" height="1.4" fill="rgb(140,140,140)"/><rect x="60" y="120" width="1.0" height="1.0" fill="rgb(235,235,235)"/><rect x="85" y="246" width="1.4" height="1.4" fill="rgb(140,140,140)"/><rect x="174" y="229" width="1.0" height="1.0" fill="rgb(180,180,180)"/><rect x="100" y="93" width="1.4" height="1.4" fill="rgb(140,140,140)"/><rect x="149" y="96" width="1.0" height="1.0" fill="rgb(140,140,140)"/><rect x="13" y="134" width="1.0" height="1.0" fill="rgb(100,100,100)"/><rect x="164" y="106" width="1.0" height="1.0" fill="rgb(80,80,80)"/><rect x="63" y="156" width="1.4" height="1.4" fill="rgb(80,80,80)"/><rect x="121" y="248" width="1.0" height="1.0" fill="rgb(235,235,235)"/><rect x="183" y="242" width="1.0" height="1.0" fill="rgb(140,140,140)"/><rect x="94" y="261" width="1.0" height="1.0" fill="rgb(100,100,100)"/><rect x="34" y="80" width="1.4" height="1.4" fill="rgb(100,100,100)"/><rect x="45" y="199" width="1.0" height="1.0" fill="rgb(235,235,235)"/><rect x="130" y="269" width="1.0" height="1.0" fill="rgb(180,180,180)"/><rect x="68" y="229" width="1.0" height="1.0" fill="rgb(100,100,100)"/><rect x="260" y="136" width="1.0" height="1.0" fill="rgb(180,180,180)"/><rect x="266" y="252" width="1.4" height="1.4" fill="rgb(140,140,140)"/><rect x="6" y="231" width="1.0" height="1.0" fill="rgb(180,180,180)"/><rect x="265" y="203" width="1.4" height="1.4" fill="rgb(80,80,80)"/><rect x="123" y="84" width="1.0" height="1.0" fill="rgb(140,140,140)"/><rect x="189" y="258" width="1.0" height="1.0" fill="rgb(80,80,80)"/><rect x="3" y="171" width="1.0" height="1.0" fill="rgb(180,180,180)"/><rect x="179" y="241" width="1.0" height="1.0" fill="rgb(80,80,80)"/><rect x="192" y="193" width="1.0" height="1.0" fill="rgb(140,140,140)"/><rect x="81" y="274" width="1.0" height="1.0" fill="rgb(140,140,140)"/><rect x="77" y="122" width="1.0" height="1.0" fill="rgb(180,180,180)"/><rect x="245" y="134" width="1.0" height="1.0" fill="rgb(180,180,180)"/><rect x="109" y="55" width="1.4" height="1.4" fill="rgb(80,80,80)"/><rect x="251" y="228" width="1.0" height="1.0" fill="rgb(180,180,180)"/><rect x="20" y="11" width="1.0" height="1.0" fill="rgb(235,235,235)"/><rect x="194" y="265" width="1.0" height="1.0" fill="rgb(140,140,140)"/><rect x="244" y="256" width="1.0" height="1.0" fill="rgb(100,100,100)"/><rect x="192" y="122" width="1.4" height="1.4" fill="rgb(235,235,235)"/><rect x="123" y="228" width="1.4" height="1.4" fill="rgb(100,100,100)"/><rect x="102" y="219" width="1.0" height="1.0" fill="rgb(140,140,140)"/><rect x="144" y="190" width="1.0" height="1.0" fill="rgb(140,140,140)"/><rect x="137" y="195" width="1.0" height="1.0" fill="rgb(180,180,180)"/><rect x="56" y="264" width="1.0" height="1.0" fill="rgb(100,100,100)"/><rect x="14" y="172" width="1.0" height="1.0" fill="rgb(235,235,235)"/><rect x="166" y="250" width="1.0" height="1.0" fill="rgb(180,180,180)"/><rect x="264" y="214" width="1.0" height="1.0" fill="rgb(140,140,140)"/><rect x="35" y="207" width="1.0" height="1.0" fill="rgb(100,100,100)"/><rect x="89" y="102" width="1.4" height="1.4" fill="rgb(140,140,140)"/><rect x="273" y="48" width="1.0" height="1.0" fill="rgb(100,100,100)"/><rect x="59" y="134" width="1.0" height="1.0" fill="rgb(235,235,235)"/><rect x="186" y="268" width="1.0" height="1.0" fill="rgb(235,235,235)"/><rect x="233" y="171" width="1.0" height="1.0" fill="rgb(180,180,180)"/><rect x="106" y="232" width="1.0" height="1.0" fill="rgb(140,140,140)"/><rect x="235" y="204" width="1.0" height="1.0" fill="rgb(180,180,180)"/><rect x="45" y="235" width="1.0" height="1.0" fill="rgb(235,235,235)"/><rect x="271" y="45" width="1.0" height="1.0" fill="rgb(235,235,235)"/><rect x="2" y="27" width="1.0" height="1.0" fill="rgb(235,235,235)"/><rect x="76" y="189" width="1.0" height="1.0" fill="rgb(140,140,140)"/><rect x="110" y="45" width="1.4" height="1.4" fill="rgb(180,180,180)"/><rect x="80" y="192" width="1.0" height="1.0" fill="rgb(140,140,140)"/><rect x="64" y="125" width="1.0" height="1.0" fill="rgb(235,235,235)"/><rect x="118" y="209" width="1.0" height="1.0" fill="rgb(180,180,180)"/><rect x="92" y="249" width="1.0" height="1.0" fill="rgb(140,140,140)"/><rect x="236" y="264" width="1.0" height="1.0" fill="rgb(180,180,180)"/><rect x="150" y="120" width="1.0" height="1.0" fill="rgb(180,180,180)"/><rect x="167" y="225" width="1.0" height="1.0" fill="rgb(100,100,100)"/><rect x="192" y="67" width="1.0" height="1.0" fill="rgb(235,235,235)"/><rect x="235" y="220" width="1.0" height="1.0" fill="rgb(140,140,140)"/><rect x="242" y="23" width="1.0" height="1.0" fill="rgb(80,80,80)"/><rect x="118" y="224" width="1.4" height="1.4" fill="rgb(180,180,180)"/><rect x="237" y="184" width="1.0" height="1.0" fill="rgb(180,180,180)"/><rect x="125" y="264" width="1.4" height="1.4" fill="rgb(140,140,140)"/><rect x="13" y="98" width="1.0" height="1.0" fill="rgb(80,80,80)"/><rect x="13" y="91" width="1.0" height="1.0" fill="rgb(180,180,180)"/><rect x="226" y="105" width="1.0" height="1.0" fill="rgb(140,140,140)"/><rect x="25" y="37" width="1.0" height="1.0" fill="rgb(140,140,140)"/><rect x="99" y="217" width="1.4" height="1.4" fill="rgb(80,80,80)"/><rect x="184" y="186" width="1.0" height="1.0" fill="rgb(80,80,80)"/><rect x="103" y="102" width="1.0" height="1.0" fill="rgb(235,235,235)"/><rect x="130" y="224" width="1.0" height="1.0" fill="rgb(100,100,100)"/><rect x="41" y="194" width="1.0" height="1.0" fill="rgb(180,180,180)"/><rect x="262" y="68" width="1.0" height="1.0" fill="rgb(80,80,80)"/><rect x="32" y="205" width="1.0" height="1.0" fill="rgb(235,235,235)"/><rect x="49" y="156" width="1.4" height="1.4" fill="rgb(100,100,100)"/><rect x="152" y="195" width="1.4" height="1.4" fill="rgb(80,80,80)"/><rect x="223" y="48" width="1.0" height="1.0" fill="rgb(80,80,80)"/><rect x="93" y="245" width="1.4" height="1.4" fill="rgb(180,180,180)"/><rect x="137" y="243" width="1.0" height="1.0" fill="rgb(180,180,180)"/><rect x="77" y="170" width="1.4" height="1.4" fill="rgb(140,140,140)"/><rect x="76" y="256" width="1.0" height="1.0" fill="rgb(80,80,80)"/><rect x="134" y="224" width="1.4" height="1.4" fill="rgb(180,180,180)"/><rect x="150" y="130" width="1.0" height="1.0" fill="rgb(100,100,100)"/><rect x="50" y="8" width="1.0" height="1.0" fill="rgb(180,180,180)"/><rect x="87" y="246" width="1.0" height="1.0" fill="rgb(100,100,100)"/><rect x="79" y="264" width="1.0" height="1.0" fill="rgb(235,235,235)"/><rect x="19" y="202" width="1.0" height="1.0" fill="rgb(140,140,140)"/><rect x="228" y="272" width="1.0" height="1.0" fill="rgb(80,80,80)"/><rect x="245" y="264" width="1.0" height="1.0" fill="rgb(100,100,100)"/><rect x="141" y="231" width="1.0" height="1.0" fill="rgb(140,140,140)"/><rect x="191" y="55" width="1.0" height="1.0" fill="rgb(80,80,80)"/><rect x="257" y="184" width="1.0" height="1.0" fill="rgb(235,235,235)"/><rect x="217" y="86" width="1.0" height="1.0" fill="rgb(100,100,100)"/><rect x="192" y="241" width="1.0" height="1.0" fill="rgb(80,80,80)"/><rect x="218" y="12" width="1.0" height="1.0" fill="rgb(235,235,235)"/><rect x="264" y="36" width="1.0" height="1.0" fill="rgb(100,100,100)"/><rect x="118" y="172" width="1.0" height="1.0" fill="rgb(235,235,235)"/><rect x="39" y="233" width="1.0" height="1.0" fill="rgb(100,100,100)"/><rect x="85" y="166" width="1.0" height="1.0" fill="rgb(100,100,100)"/><rect x="35" y="228" width="1.0" height="1.0" fill="rgb(140,140,140)"/><rect x="5" y="172" width="1.0" height="1.0" fill="rgb(235,235,235)"/><rect x="229" y="78" width="1.4" height="1.4" fill="rgb(140,140,140)"/><rect x="223" y="79" width="1.0" height="1.0" fill="rgb(100,100,100)"/><rect x="55" y="246" width="1.0" height="1.0" fill="rgb(100,100,100)"/><rect x="258" y="142" width="1.0" height="1.0" fill="rgb(235,235,235)"/><rect x="198" y="196" width="1.0" height="1.0" fill="rgb(140,140,140)"/><rect x="262" y="170" width="1.0" height="1.0" fill="rgb(180,180,180)"/><rect x="13" y="152" width="1.0" height="1.0" fill="rgb(180,180,180)"/><rect x="259" y="100" width="1.0" height="1.0" fill="rgb(180,180,180)"/><rect x="194" y="236" width="1.4" height="1.4" fill="rgb(180,180,180)"/><rect x="76" y="191" width="1.0" height="1.0" fill="rgb(80,80,80)"/><rect x="194" y="262" width="1.0" height="1.0" fill="rgb(140,140,140)"/><rect x="8" y="263" width="1.0" height="1.0" fill="rgb(235,235,235)"/><rect x="232" y="269" width="1.0" height="1.0" fill="rgb(180,180,180)"/><circle cx="136.5" cy="139.0" r="71.0" fill="#0d0ea4"/><g clip-path="url(#gcl)"><path d="M84.5,159.5 86.2,162.8 89.2,165.2 90.8,165.8ZM76.5,143.5 76.8,144.2 76.5,144.5 77.2,145.2 77.5,146.8 81.2,154.2 85.2,158.2 82.2,151.8 80.8,148.2 81.2,147.8 79.2,145.8 77.8,145.2ZM185.8,123.5 185.5,124.2 184.5,124.2 184.8,124.5 183.8,124.8 184.2,125.2 183.8,126.5 184.2,129.5 187.2,129.2ZM168.8,106.2 175.5,106.8 174.2,104.2 169.8,103.8 169.5,105.5ZM173.2,84.8 174.2,87.5 175.8,88.2 176.2,87.8 175.8,86.5ZM178.5,81.8 181.2,84.5 184.5,86.8 184.8,87.8 188.5,92.5 188.2,93.2 190.2,94.8 189.5,95.5 188.5,94.5 186.5,94.5 184.5,93.8 184.8,97.2 188.2,105.5 187.8,105.8 188.2,107.8 187.8,109.8 190.5,115.2 191.8,115.8 191.8,113.8 192.5,113.2 195.5,117.2 195.8,118.2 196.2,117.8 195.8,117.5 196.2,115.8 194.8,112.8 194.5,110.8 192.5,108.8 191.5,106.8 190.5,102.8 189.5,101.5 189.8,100.5 191.2,101.8 192.2,105.2 194.2,108.2 195.2,108.8 195.2,107.2 195.8,106.5 196.2,106.8 195.8,109.5 197.2,111.2 196.8,112.5 198.8,116.8 197.8,117.5 197.5,119.8 197.2,120.2 196.5,119.8 196.8,120.2 196.5,120.5 195.5,120.5 194.2,118.8 193.5,115.8 192.8,117.5 195.2,122.2 193.8,124.2 193.8,127.5 192.8,128.8 191.8,127.8 192.2,127.5 191.8,126.2 190.5,125.2 190.5,124.5 187.2,120.5 187.5,119.5 187.2,118.5 185.8,117.8 185.5,116.5 184.8,116.8 185.2,118.8 184.8,119.2 186.5,123.2 186.8,123.5 187.5,123.2 188.8,125.2 187.8,126.5 188.5,127.8 187.8,128.8 189.2,129.5 188.2,132.5 192.5,128.8 193.2,129.5 193.2,131.2 191.5,132.5 191.2,131.8 191.2,133.2 189.5,134.8 190.2,136.2 192.2,136.8 193.2,139.5 192.8,142.2 193.2,142.8 190.2,144.2 188.8,143.8 187.8,144.2 186.5,145.8 187.2,149.2 186.5,153.8 187.2,154.2 186.8,156.8 188.8,155.5 189.8,156.2 189.8,158.2 188.8,160.8 187.2,162.2 186.2,164.2 184.8,168.8 183.2,171.2 179.2,174.8 179.2,175.5 175.5,179.8 175.5,180.8 174.8,181.2 172.8,184.5 173.2,186.2 172.2,188.8 169.5,191.8 169.8,192.5 169.5,194.2 171.8,194.8 172.5,195.5 172.2,196.2 173.2,196.8 176.2,196.5 182.8,192.2 189.8,185.8 193.8,180.8 198.2,174.2 202.5,165.2 205.8,154.2 207.2,144.8 206.5,145.8 205.8,150.5 204.8,152.2 203.8,151.8 202.5,152.8 201.8,152.2 201.5,150.2 202.2,147.5 195.8,153.5 195.2,155.2 193.2,157.2 190.5,156.8 191.8,155.2 193.5,154.2 194.8,150.5 194.5,149.2 195.5,145.8 196.8,143.8 196.5,141.8 197.5,140.5 198.5,140.5 198.5,139.5 199.5,137.5 200.8,138.5 201.8,140.2 203.2,140.2 203.8,140.8 204.2,143.5 203.8,139.5 204.5,139.2 204.5,138.5 202.2,137.2 200.8,135.2 200.8,133.8 201.8,133.5 203.2,135.2 204.8,136.2 204.8,137.8 205.8,139.2 205.8,140.8 206.2,140.8 206.2,138.2 205.5,136.8 205.8,134.2 206.2,133.8 206.5,134.2 207.2,137.5 207.2,132.2 206.5,127.2 206.5,130.8 206.2,131.2 205.8,130.8 204.5,124.5 204.8,123.2 205.5,124.5 204.8,119.8 204.2,119.5 204.5,118.8 201.5,110.5 197.2,102.2 189.8,92.2 183.2,85.5 182.2,85.2 181.2,83.8ZM190.8,96.5 192.2,98.2 192.5,99.2 192.2,99.5 189.8,97.8ZM147.2,77.8 142.8,79.5 147.8,81.2 148.2,81.8 147.5,83.5 148.2,84.2 149.8,84.5 151.2,86.2 150.8,90.2 149.8,92.5 150.8,94.5 149.5,95.5 149.2,95.2 147.5,97.8 147.8,99.8 147.5,100.2 147.8,100.8 147.5,101.5 147.8,101.8 147.5,102.2 147.8,105.2 147.5,105.5 149.5,109.5 150.8,110.8 152.5,111.2 153.8,108.2 157.5,103.2 158.2,102.8 159.2,103.2 160.5,102.5 160.8,102.8 164.2,100.5 164.5,100.8 166.5,100.2 166.8,100.5 168.2,99.2 167.2,98.2 168.2,97.5 168.5,97.8 167.5,96.2 168.2,93.8 167.2,92.2 167.2,89.5 165.5,85.5 165.8,85.2 165.5,83.8 164.5,83.8 160.8,81.2 155.2,80.8 152.8,78.5 149.2,78.5ZM148.5,81.2 148.8,80.8 150.5,81.2 150.2,81.5ZM133.5,73.2 133.8,74.2 135.2,75.5 136.8,76.2 139.5,78.2 143.5,76.5 141.5,75.5ZM133.5,68.5 125.8,68.8 117.8,70.5 118.2,70.8 106.5,76.5 98.8,81.2 95.8,84.2 95.2,83.8 95.5,83.5 88.2,88.5 82.8,93.8 80.2,97.2 79.5,98.8 75.2,105.5 75.5,106.5 75.2,106.8 74.8,106.5 73.5,108.2 71.2,113.8 73.2,109.8 73.5,110.8 71.5,115.2 69.8,121.8 68.5,124.5 67.8,129.2 68.2,138.5 69.2,140.2 69.5,145.2 70.2,148.2 71.2,150.2 72.5,159.2 75.2,165.2 75.8,164.8 76.5,165.2 77.8,168.5 77.5,171.5 75.8,172.2 75.2,171.8 75.8,173.8 75.5,174.5 80.2,182.2 83.2,185.8 89.8,192.5 98.8,199.2 110.8,205.2 117.8,207.5 123.8,208.8 132.2,208.8 133.2,208.5 132.2,207.5 130.8,207.5 126.8,205.8 119.8,204.2 116.8,202.2 114.2,201.5 112.2,200.2 111.5,198.5 111.8,198.2 110.8,196.2 108.5,193.8 102.5,190.5 100.5,188.5 97.2,183.5 97.2,182.5 96.5,181.5 93.8,180.2 91.5,177.8 87.8,175.5 86.2,172.5 84.5,171.8 84.2,170.8 84.5,169.5 84.2,169.8 82.8,169.5 80.8,167.8 79.5,168.8 78.5,168.8 77.8,168.2 77.2,165.8 73.8,161.8 73.2,159.5 73.5,155.5 74.2,154.8 73.8,153.2 74.2,152.5 71.5,147.2 71.5,146.5 74.8,141.8 73.2,139.2 72.5,138.8 71.2,140.5 69.5,137.8 69.5,133.2 70.2,129.5 74.5,123.2 75.2,123.8 75.5,123.5 76.8,124.5 77.5,125.5 77.5,126.8 78.5,128.5 78.2,128.8 78.5,129.5 79.5,128.5 81.2,130.2 81.5,132.5 82.8,134.2 82.5,134.5 82.8,135.8 81.2,141.2 81.5,141.5 81.2,142.8 81.8,144.2 83.2,142.8 84.2,136.8 85.5,134.8 90.2,133.5 90.8,133.8 91.2,133.5 91.8,134.2 93.5,133.8 95.2,132.8 96.5,130.5 96.8,130.8 98.2,129.5 100.5,129.2 102.2,127.2 103.2,127.5 103.5,127.2 104.5,127.8 104.8,127.5 107.2,128.8 106.8,126.8 108.2,125.5 109.8,125.8 110.2,125.5 110.8,125.8 113.8,125.5 115.5,125.8 116.2,126.5 114.5,127.2 113.5,128.8 113.8,129.2 114.2,128.8 115.8,129.2 116.2,128.8 117.8,129.2 119.5,128.8 119.8,129.2 121.2,128.5 121.8,129.2 122.2,128.5 122.5,128.8 123.5,128.5 123.2,126.2 120.8,127.2 120.2,126.5 120.5,126.2 119.5,125.8 119.2,124.8 118.5,124.5 118.8,122.8 120.8,121.2 120.5,119.8 118.5,118.5 118.8,117.8 119.2,118.2 121.5,117.8 126.8,120.8 127.5,120.5 128.5,121.2 132.8,120.5 133.2,120.8 131.5,122.5 130.8,122.5 129.8,123.8 128.8,124.5 128.5,124.2 127.5,125.5 125.8,126.5 127.2,127.8 128.2,128.2 128.8,129.2 132.8,131.5 134.2,127.8 132.2,125.2 132.2,123.5 132.8,122.5 132.5,122.2 133.2,120.5 134.5,118.5 134.2,114.8 132.2,111.8 132.5,111.5 132.2,109.2 133.5,105.2 133.2,104.8 133.5,102.5 131.2,103.8 128.8,103.5 128.2,102.5 128.2,101.5 130.2,99.2 128.8,97.8 129.2,96.5 128.5,96.2 128.8,95.8 128.5,95.2 126.8,93.8 126.2,94.2 123.5,97.2 121.2,98.2 121.5,98.5 121.2,99.8 120.2,101.2 118.2,102.5 114.8,103.2 111.2,106.5 110.2,105.8 110.5,103.5 113.5,100.2 112.5,98.2 112.2,95.8 112.5,94.2 111.2,92.5 113.2,90.8 113.5,89.2 116.8,87.8 118.2,88.2 120.5,87.5 120.8,87.8 122.5,87.5 123.5,88.2 125.2,88.2 127.2,87.2 130.2,87.8 132.8,86.8 133.8,85.8 135.5,88.8 134.5,89.8 130.2,91.2 130.5,94.2 130.2,94.5 130.8,95.5 130.5,96.2 131.2,96.5 130.8,96.8 131.2,97.8 136.5,99.2 140.8,93.8 140.5,92.8 140.8,86.8 139.8,84.2 140.2,83.5 137.2,81.5 133.5,84.8 132.8,84.5 129.8,85.8 129.2,85.2 130.5,84.5 130.2,84.2 130.5,82.8 133.8,80.2 131.8,80.5 129.8,82.2 129.5,81.8 127.2,82.5 126.8,81.8 127.5,81.2 125.5,80.2 126.8,78.2 129.2,79.8 132.8,77.5 133.2,76.8 132.2,74.8 131.5,74.5 128.2,75.2 125.8,77.5 126.8,78.2 126.5,78.5 124.5,77.8 124.8,76.5 124.5,76.8 124.2,76.2 127.2,73.5 126.8,72.2 126.2,71.8 130.8,69.5 133.8,68.8ZM74.8,106.5 75.2,107.2 74.5,108.2 74.2,107.2Z" fill="#d0dc8a" fill-rule="evenodd"/><path d="M96.1,83.7 95.5,85.2 95.2,86.7 95.0,88.3 95.1,90.0 95.3,91.7 95.7,93.6 96.4,95.5 97.2,97.4 98.3,99.5 98.9,102.0 99.7,104.7 100.1,111.0 97.7,116.7 100.1,119.2 106.0,119.3 110.9,123.0 116.3,121.8M128.8,70.7 124.0,70.9 119.4,71.5 114.9,72.4 112.7,73.4 110.6,74.5M77.6,101.5 76.6,104.1 75.9,106.9 75.9,110.7 75.1,114.9 74.5,119.2 73.0,125.6M88.2,88.6 87.4,90.3 86.8,92.2 86.4,94.1 86.2,96.2M91.8,87.4 91.1,89.3 90.6,91.2 90.3,93.3 90.3,95.5 90.4,97.8M95.2,86.6 90.8,89.4 86.7,92.5M95.0,89.7 90.5,92.8 86.2,96.2 82.4,99.7 78.9,103.3 75.9,106.9M95.8,93.8 91.2,97.2 86.9,100.7 83.0,104.4 79.5,108.2 76.3,112.1M87.2,90.8 84.1,93.4 81.5,97.1 79.2,101.1M86.4,94.3 82.6,97.6 79.2,101.1M85.1,98.5 85.2,101.1 85.5,103.8 86.2,106.6 87.3,109.5M80.8,102.6 80.8,105.0 81.0,107.5 81.5,110.0 82.2,112.6 83.2,115.3M80.7,107.8 76.4,112.9 76.2,110.4M81.3,110.2 79.3,112.6 79.6,115.8 80.2,119.2M97.6,98.1 93.6,101.8 89.9,105.7 86.7,110.1M87.9,99.9 88.7,102.7 89.9,105.7M91.7,96.7 92.5,99.2 93.6,101.8M83.2,115.3 79.9,119.5 77.1,123.6M92.7,108.9 88.4,113.4 86.1,119.1 81.1,122.6 79.2,125.2M90.6,105.1 92.7,108.9M93.1,114.1 88.1,119.1M94.4,115.7 91.2,120.3M97.7,119.4 95.3,122.4 91.2,120.3 86.1,119.1M84.6,122.7 87.0,125.1 89.7,127.5 92.7,129.8 96.0,132.1M84.3,122.3 80.4,128.8M86.6,125.5 82.8,131.1 85.2,135.0M88.0,127.4 86.7,133.7M95.7,122.8 99.9,127.5M98.2,120.0 102.5,123.9 102.8,126.7M107.6,120.5 102.8,126.7M109.9,122.3 106.5,127.1M91.7,122.4 94.3,124.6 97.2,126.9M111.2,78.2 106.6,79.8 102.3,81.6 98.6,84.7 95.0,88.1M111.4,81.9 105.7,84.4 100.3,87.2 95.1,90.3M112.8,85.2 107.1,88.3 101.5,91.6 96.3,95.3M104.1,95.1 108.0,95.0 112.0,94.8M98.3,99.5 104.1,95.1M114.9,72.4 114.1,73.0 113.3,73.7 112.7,74.5 112.1,75.3 111.7,76.2 111.4,77.2 111.2,78.2 111.1,79.2 111.1,80.3 111.3,81.5 111.7,82.7 112.2,84.0 112.8,85.2 113.9,87.0 115.2,88.9M109.9,107.3 104.7,112.9M125.5,73.9 119.0,76.0 118.8,77.0 118.6,78.0 118.6,79.0 118.7,80.1 118.9,81.3 119.3,82.5 112.8,85.2M133.6,103.1 125.4,109.0 127.4,112.4 129.8,115.9 132.4,119.3M100.6,200.2 96.0,197.0 91.5,193.1 86.9,189.0 82.7,184.5 85.2,185.5 84.9,182.1 88.4,184.4 92.9,186.6 97.8,188.5M76.0,174.7 79.8,178.0 85.2,185.5M76.2,172.4 79.8,178.0M83.9,170.3 83.0,174.9 88.7,181.0 88.4,184.4M98.5,185.9 97.8,188.5 101.7,193.4 109.2,196.7M102.4,190.2 101.7,193.4M106.8,193.0 105.4,195.0M180.6,173.3 185.8,171.7 185.4,173.9 181.3,175.2 178.2,182.6 173.0,183.9M185.8,171.7 190.2,166.6 194.0,161.4 193.4,157.2M185.7,172.4 188.9,174.4 191.6,175.7 193.8,176.4 196.6,172.6 199.1,168.8 201.2,164.9 202.5,163.5 203.5,162.0M206.2,152.3 206.7,148.9 206.9,145.3M201.0,148.6 200.3,155.3 201.5,158.0 201.5,161.6 201.2,164.9M201.5,158.0 202.7,153.3M202.5,163.2 202.0,165.8 200.2,170.1M193.8,176.4 193.3,179.0 195.2,177.6 196.8,176.0M176.7,189.4 181.0,187.5 185.0,185.3 186.4,181.7 187.7,177.8 188.8,173.6M193.3,179.0 189.5,182.7 189.5,184.7 187.8,187.8M170.7,190.2 176.7,189.4 176.4,192.0 177.7,194.1 176.2,196.4M181.1,193.4 184.1,189.4 187.5,186.6 185.4,190.0M181.8,190.5 184.1,189.4M192.7,143.2 196.5,142.8M186.8,147.6 188.7,147.1 188.8,155.8M193.3,128.6 195.8,129.2 197.3,130.2 197.7,132.8 197.2,135.0 198.9,138.5M195.8,129.2 194.0,123.4M197.3,130.2 199.8,129.1 199.3,124.4 197.3,120.0M197.7,132.8 198.9,131.8 200.9,131.9 201.7,130.4 201.5,128.1 199.8,129.1M199.3,124.4 201.3,125.1 202.5,124.0 201.6,120.8 199.7,116.8 198.5,116.3M201.5,128.1 202.9,125.7 203.4,124.5 204.8,126.3M201.7,130.4 202.9,130.2 204.0,131.3 204.6,131.0 205.5,128.4M204.4,135.6 205.1,136.2 205.9,132.7M199.7,116.8 198.9,112.4 196.2,107.8M202.5,124.0 202.4,120.7 202.1,117.5 202.0,114.7 203.1,115.3 204.3,119.0M192.8,113.1 191.4,110.0 189.1,106.4 187.6,102.3 185.8,98.4 185.7,97.4 187.4,98.0 189.0,101.1M184.6,93.6 187.0,95.8 190.1,99.5 193.3,102.8 195.3,106.5M206.3,131.6 205.9,132.7" fill="none" stroke="#2a2a20" stroke-width="0.5" opacity="0.8"/><circle cx="136.5" cy="139.0" r="72.0" fill="url(#gsh)"/></g><line x1="159.5" y1="75.9" x2="181.5" y2="15.3" stroke="#1818ff" stroke-width="1.6"/><path d="M80.1,182.9 79.4,183.8 78.7,184.6 78.1,185.5 77.6,186.3 77.1,187.0 76.7,187.7 76.5,188.3 76.3,188.9 76.3,189.4 76.3,189.8 76.6,190.2 76.9,190.4 77.5,190.5 78.2,190.5 79.1,190.4 80.2,190.2 81.5,189.8 83.1,189.2 84.9,188.5 87.0,187.5 89.4,186.4 92.0,185.0 95.0,183.4 98.3,181.6 101.9,179.5 105.9,177.1 110.2,174.5 114.8,171.5 119.8,168.3 125.0,164.9 130.6,161.1 136.4,157.2 142.5,153.0 148.7,148.5 155.1,143.9 161.6,139.2 168.1,134.4 174.5,129.5 180.9,124.6 187.1,119.7 193.1,114.9 198.9,110.2 204.3,105.7 209.3,101.4 213.9,97.4 218.1,93.6 221.8,90.1 225.1,87.0 227.9,84.1 230.2,81.6 232.1,79.4 233.5,77.6 234.5,76.0 235.1,74.8 235.3,73.8 235.2,73.1 234.8,72.7 234.1,72.5 233.1,72.5 231.9,72.7 230.5,73.1 229.0,73.6 227.3,74.3 225.4,75.1 223.5,76.1 221.4,77.1 219.3,78.2 217.1,79.4 214.8,80.6 212.6,81.9 210.3,83.2 207.9,84.6 205.6,86.0 203.2,87.5 200.9,88.9 198.5,90.4 196.2,91.9 193.8,93.4M87.6,191.9 87.4,193.1 87.3,194.3 87.2,195.5 87.3,196.6 87.4,197.6 87.7,198.6 88.0,199.5 88.5,200.4 89.1,201.1 89.8,201.8 90.7,202.4 91.8,202.8 93.0,203.2 94.4,203.4 95.9,203.4 97.7,203.3 99.7,203.1 101.9,202.6 104.3,201.9 107.0,201.0 110.0,199.9 113.1,198.5 116.6,196.8 120.3,194.9 124.3,192.6 128.5,190.1 132.9,187.2 137.7,184.1 142.6,180.6 147.7,176.8 153.0,172.7 158.4,168.3 163.9,163.7 169.5,158.8 175.1,153.7 180.7,148.4 186.1,143.0 191.5,137.5 196.6,132.0 201.5,126.5 206.1,121.1 210.5,115.8 214.4,110.6 218.0,105.6 221.2,100.9 224.0,96.4 226.3,92.2 228.3,88.3 229.8,84.8 230.9,81.6 231.6,78.7 232.0,76.2 232.0,74.0 231.7,72.1 231.1,70.6 230.3,69.3 229.2,68.4 227.8,67.6 226.3,67.2 224.6,67.0 222.8,66.9 220.8,67.1 218.8,67.5 216.6,68.0 214.4,68.6 212.1,69.4 209.8,70.3 207.4,71.3 205.1,72.4 202.7,73.6 200.3,74.8 197.9,76.1 195.5,77.5 193.1,78.9 190.7,80.3 188.4,81.8 186.0,83.3 183.7,84.9M96.4,197.8 96.7,199.2 97.1,200.6 97.6,202.0 98.2,203.3 98.9,204.5 99.7,205.7 100.6,206.9 101.6,207.9 102.8,208.9 104.0,209.8 105.4,210.5 107.0,211.2 108.7,211.7 110.6,212.1 112.6,212.3 114.8,212.4 117.2,212.3 119.7,212.0 122.5,211.5 125.4,210.7 128.5,209.7 131.9,208.5 135.4,207.0 139.1,205.2 143.0,203.1 147.1,200.7 151.3,198.0 155.7,194.9 160.2,191.6 164.8,187.9 169.6,183.9 174.3,179.5 179.1,174.9 183.9,170.0 188.6,164.9 193.2,159.5 197.7,154.0 202.1,148.3 206.2,142.6 210.1,136.7 213.7,130.9 217.1,125.1 220.1,119.4 222.7,113.8 225.0,108.4 226.9,103.2 228.4,98.3 229.6,93.6 230.3,89.2 230.8,85.2 230.8,81.5 230.6,78.1 230.1,75.0 229.2,72.3 228.1,69.9 226.8,67.8 225.3,66.1 223.6,64.7 221.7,63.5 219.6,62.6 217.5,62.0 215.2,61.6 212.9,61.4 210.5,61.5 208.0,61.7 205.5,62.1 203.0,62.6 200.4,63.3 197.9,64.2 195.3,65.1 192.8,66.1 190.2,67.3 187.7,68.5 185.2,69.8 182.8,71.2 180.4,72.6 178.0,74.1 175.6,75.7 173.3,77.2M106.8,204.3 107.8,205.8 108.9,207.1 110.1,208.5 111.4,209.7 112.8,210.9 114.3,212.0 116.0,213.0 117.7,213.9 119.6,214.7 121.6,215.4 123.7,216.0 126.0,216.4 128.4,216.7 130.9,216.8 133.6,216.7 136.4,216.5 139.4,216.0 142.5,215.3 145.7,214.4 149.1,213.2 152.6,211.8 156.3,210.1 160.0,208.2 163.9,205.9 167.8,203.4 171.8,200.5 175.9,197.3 180.1,193.9 184.2,190.1 188.3,186.0 192.4,181.6 196.5,176.9 200.4,172.0 204.3,166.9 207.9,161.5 211.4,156.0 214.7,150.3 217.8,144.5 220.5,138.6 223.0,132.8 225.2,126.9 227.1,121.1 228.6,115.4 229.8,109.8 230.6,104.4 231.2,99.3 231.3,94.3 231.2,89.7 230.7,85.3 230.0,81.2 228.9,77.4 227.6,74.0 226.1,70.8 224.4,68.0 222.4,65.6 220.3,63.4 218.1,61.5 215.7,60.0 213.2,58.7 210.6,57.7 207.9,57.0 205.2,56.5 202.5,56.2 199.7,56.2 196.9,56.3 194.1,56.6 191.3,57.1 188.5,57.8 185.7,58.6 183.0,59.5 180.3,60.6 177.6,61.7 175.0,63.0 172.4,64.3 169.9,65.7 167.4,67.2 165.0,68.8 162.6,70.4 160.3,72.0M118.5,208.4 120.2,209.7 121.9,210.9 123.8,212.0 125.7,213.0 127.7,213.9 129.9,214.7 132.1,215.4 134.4,216.0 136.9,216.5 139.4,216.8 142.1,217.0 144.8,217.0 147.7,216.9 150.6,216.6 153.7,216.1 156.8,215.3 160.1,214.4 163.4,213.3 166.8,211.9 170.3,210.3 173.8,208.4 177.4,206.3 181.0,203.9 184.7,201.2 188.3,198.3 192.0,195.1 195.6,191.6 199.2,187.8 202.7,183.8 206.1,179.5 209.4,174.9 212.6,170.2 215.6,165.2 218.4,160.0 221.0,154.7 223.4,149.2 225.5,143.6 227.4,138.0 229.0,132.3 230.3,126.6 231.2,120.9 231.9,115.3 232.3,109.9 232.4,104.5 232.1,99.3 231.6,94.3 230.7,89.5 229.6,85.0 228.2,80.7 226.6,76.7 224.8,73.0 222.7,69.6 220.4,66.4 218.0,63.6 215.4,61.1 212.7,58.9 209.9,57.0 207.0,55.4 204.0,54.1 201.0,53.0 197.9,52.2 194.8,51.7 191.7,51.3 188.6,51.2 185.5,51.3 182.4,51.6 179.3,52.1 176.3,52.8 173.4,53.6 170.4,54.5 167.6,55.6 164.8,56.8 162.0,58.1 159.3,59.5 156.7,61.0 154.1,62.5 151.7,64.2 149.2,65.9 146.9,67.7M130.7,209.8 132.8,210.7 135.1,211.5 137.4,212.3 139.8,212.9 142.2,213.4 144.8,213.8 147.4,214.1 150.1,214.2 152.9,214.2 155.7,214.1 158.6,213.8 161.6,213.3 164.6,212.7 167.7,211.9 170.8,210.9 174.0,209.8 177.2,208.4 180.5,206.8 183.8,205.0 187.0,202.9 190.3,200.7 193.6,198.2 196.8,195.5 200.0,192.5 203.2,189.4 206.3,185.9 209.3,182.3 212.2,178.4 215.0,174.3 217.6,170.0 220.1,165.5 222.4,160.8 224.5,156.0 226.4,151.0 228.1,145.9 229.5,140.6 230.7,135.3 231.6,130.0 232.3,124.6 232.6,119.3 232.7,113.9 232.5,108.7 232.1,103.5 231.3,98.4 230.3,93.5 229.0,88.8 227.4,84.3 225.6,79.9 223.6,75.8 221.3,72.0 218.9,68.4 216.2,65.1 213.5,62.0 210.5,59.2 207.5,56.8 204.3,54.6 201.1,52.7 197.8,51.0 194.4,49.7 191.0,48.6 187.6,47.7 184.1,47.2 180.7,46.8 177.3,46.7 173.9,46.8 170.5,47.1 167.2,47.6 164.0,48.2 160.8,49.0 157.7,50.0 154.7,51.2 151.7,52.4 148.8,53.8 146.0,55.3 143.2,56.9 140.6,58.6 138.0,60.4 135.6,62.3 133.2,64.3 130.9,66.3 128.7,68.3M147.2,209.2 149.8,209.5 152.5,209.6 155.1,209.7 157.9,209.6 160.6,209.4 163.5,209.0 166.3,208.6 169.2,207.9 172.1,207.2 175.0,206.2 178.0,205.2 181.0,203.9 184.0,202.5 186.9,200.9 189.9,199.1 192.9,197.2 195.8,195.0 198.7,192.7 201.6,190.2 204.4,187.5 207.1,184.6 209.8,181.5 212.3,178.2 214.8,174.7 217.1,171.0 219.4,167.2 221.4,163.2 223.4,159.0 225.1,154.7 226.7,150.2 228.0,145.7 229.2,141.0 230.1,136.2 230.8,131.3 231.3,126.4 231.5,121.4 231.5,116.4 231.2,111.5 230.6,106.5 229.8,101.7 228.8,96.9 227.4,92.2 225.9,87.6 224.1,83.1 222.0,78.9 219.8,74.8 217.3,70.9 214.6,67.2 211.8,63.8 208.7,60.6 205.6,57.6 202.3,55.0 198.9,52.5 195.4,50.4 191.8,48.5 188.1,46.9 184.4,45.5 180.7,44.4 177.0,43.6 173.2,43.0 169.5,42.6 165.8,42.5 162.2,42.6 158.5,42.9 155.0,43.4 151.5,44.2 148.1,45.1 144.7,46.1 141.5,47.4 138.3,48.7 135.3,50.3 132.3,51.9 129.5,53.7 126.7,55.5 124.0,57.5 121.5,59.6 119.0,61.7 116.7,64.0 114.5,66.2 112.4,68.6 110.3,71.0 108.4,73.4M168.3,202.8 171.0,202.2 173.7,201.4 176.5,200.4 179.2,199.4 181.9,198.2 184.7,196.8 187.4,195.4 190.1,193.8 192.7,192.0 195.4,190.1 198.0,188.0 200.5,185.8 203.0,183.5 205.5,181.0 207.8,178.3 210.1,175.5 212.3,172.5 214.4,169.4 216.4,166.1 218.3,162.7 220.1,159.1 221.7,155.4 223.2,151.6 224.5,147.7 225.6,143.6 226.6,139.4 227.4,135.2 227.9,130.8 228.3,126.4 228.5,121.9 228.4,117.4 228.1,112.8 227.6,108.2 226.9,103.7 225.9,99.2 224.7,94.7 223.3,90.2 221.6,85.9 219.7,81.7 217.5,77.5 215.2,73.6 212.6,69.7 209.9,66.1 206.9,62.6 203.8,59.3 200.5,56.3 197.1,53.4 193.5,50.8 189.8,48.5 186.1,46.4 182.2,44.5 178.3,42.9 174.3,41.6 170.3,40.5 166.3,39.7 162.2,39.1 158.2,38.8 154.2,38.7 150.3,38.8 146.4,39.2 142.6,39.8 138.8,40.6 135.1,41.6 131.6,42.8 128.1,44.2 124.7,45.7 121.5,47.4 118.3,49.2 115.3,51.2 112.4,53.3 109.6,55.5 107.0,57.9 104.5,60.3 102.1,62.8 99.8,65.4 97.7,68.0 95.7,70.7 93.8,73.4 92.1,76.2 90.5,79.1 89.0,81.9 87.6,84.8 86.4,87.7M188.1,187.9 190.5,186.2 192.8,184.5 195.2,182.6 197.4,180.6 199.7,178.5 201.8,176.3 203.9,173.9 206.0,171.5 208.0,168.9 209.8,166.2 211.6,163.3 213.4,160.4 215.0,157.3 216.5,154.1 217.8,150.8 219.1,147.4 220.2,143.9 221.2,140.3 222.0,136.6 222.7,132.9 223.2,129.0 223.5,125.0 223.7,121.0 223.7,117.0 223.5,112.9 223.0,108.7 222.4,104.6 221.6,100.4 220.6,96.2 219.3,92.1 217.8,88.0 216.2,83.9 214.2,79.9 212.1,76.0 209.8,72.1 207.3,68.4 204.5,64.9 201.6,61.4 198.5,58.1 195.2,55.0 191.7,52.1 188.1,49.4 184.4,46.9 180.5,44.6 176.5,42.6 172.4,40.8 168.3,39.2 164.0,37.9 159.8,36.9 155.5,36.1 151.2,35.6 146.9,35.3 142.6,35.3 138.3,35.5 134.1,36.0 130.0,36.7 126.0,37.6 122.0,38.8 118.2,40.1 114.4,41.7 110.8,43.5 107.3,45.4 104.0,47.5 100.8,49.7 97.7,52.1 94.8,54.7 92.1,57.3 89.5,60.1 87.0,62.9 84.8,65.9 82.6,68.9 80.7,72.0 78.9,75.1 77.3,78.3 75.8,81.5 74.5,84.7 73.3,88.0 72.2,91.2 71.3,94.5 70.6,97.8 70.0,101.0 69.5,104.3 69.1,107.5 68.9,110.7 68.8,113.9 68.8,117.1M203.9,162.2 205.5,159.7 207.1,157.1 208.5,154.4 209.9,151.6 211.1,148.8 212.3,145.8 213.4,142.8 214.4,139.7 215.2,136.4 215.9,133.1 216.5,129.8 217.0,126.3 217.3,122.8 217.5,119.3 217.5,115.6 217.3,112.0 217.0,108.2 216.5,104.5 215.9,100.7 215.0,96.9 214.0,93.0 212.8,89.2 211.4,85.4 209.8,81.6 207.9,77.9 205.9,74.2 203.7,70.6 201.2,67.0 198.6,63.6 195.8,60.2 192.8,57.0 189.6,53.9 186.2,51.0 182.6,48.2 178.9,45.6 175.0,43.2 170.9,41.0 166.8,39.1 162.5,37.3 158.2,35.9 153.7,34.6 149.2,33.6 144.7,32.9 140.1,32.4 135.5,32.2 130.9,32.3 126.3,32.7 121.8,33.3 117.4,34.1 113.0,35.3 108.8,36.6 104.6,38.2 100.6,40.1 96.7,42.1 92.9,44.4 89.3,46.8 85.9,49.5 82.7,52.2 79.6,55.2 76.8,58.3 74.1,61.5 71.7,64.8 69.4,68.2 67.3,71.6 65.4,75.2 63.8,78.8 62.3,82.4 61.0,86.1 59.9,89.7 59.0,93.4 58.2,97.1 57.7,100.8 57.3,104.4 57.1,108.1 57.0,111.6 57.1,115.2 57.3,118.7 57.7,122.1 58.2,125.5 58.8,128.8 59.6,132.1 60.4,135.3 61.4,138.4 62.5,141.4 63.7,144.4 64.9,147.2 66.3,150.0M208.1,132.3 208.7,129.4 209.2,126.4 209.6,123.3 209.9,120.1 210.1,116.9 210.1,113.7 210.1,110.4 209.8,107.0 209.5,103.7 209.0,100.2 208.3,96.8 207.5,93.3 206.5,89.8 205.3,86.3 204.0,82.8 202.5,79.3 200.8,75.8 198.9,72.3 196.8,68.9 194.6,65.6 192.1,62.3 189.4,59.0 186.6,55.9 183.5,52.9 180.3,50.0 176.8,47.2 173.2,44.6 169.4,42.1 165.5,39.8 161.3,37.7 157.0,35.9 152.6,34.2 148.1,32.8 143.5,31.6 138.7,30.7 133.9,30.1 129.1,29.8 124.2,29.7 119.3,29.9 114.4,30.4 109.6,31.2 104.8,32.3 100.1,33.7 95.5,35.4 91.0,37.3 86.6,39.5 82.4,42.0 78.4,44.6 74.6,47.6 71.0,50.7 67.5,54.0 64.4,57.4 61.4,61.1 58.7,64.8 56.2,68.7 54.0,72.7 52.0,76.7 50.3,80.8 48.8,85.0 47.6,89.2 46.6,93.4 45.8,97.6 45.3,101.7 45.0,105.9 44.9,110.0 44.9,114.0 45.2,118.0 45.7,121.9 46.3,125.8 47.2,129.5 48.1,133.1 49.2,136.7 50.5,140.1 51.9,143.5 53.4,146.7 55.0,149.9 56.7,152.9 58.5,155.8 60.4,158.6 62.3,161.2 64.4,163.8 66.5,166.2 68.7,168.6 70.9,170.8 73.2,172.9M201.9,108.5 201.7,105.5 201.5,102.4 201.1,99.3 200.6,96.2 199.9,93.0 199.1,89.8 198.2,86.6 197.2,83.4 195.9,80.2 194.5,76.9 193.0,73.7 191.3,70.4 189.4,67.2 187.3,64.1 185.0,60.9 182.6,57.8 179.9,54.8 177.1,51.9 174.0,49.0 170.8,46.3 167.4,43.7 163.7,41.2 159.9,38.9 155.9,36.7 151.7,34.7 147.3,33.0 142.8,31.4 138.2,30.1 133.4,29.1 128.4,28.3 123.4,27.8 118.3,27.6 113.2,27.8 108.0,28.2 102.8,29.0 97.6,30.0 92.5,31.5 87.4,33.2 82.5,35.3 77.6,37.7 73.0,40.3 68.5,43.3 64.2,46.6 60.1,50.1 56.3,53.9 52.7,57.8 49.4,62.0 46.4,66.3 43.7,70.8 41.3,75.4 39.2,80.1 37.5,84.9 36.0,89.7 34.8,94.5 34.0,99.3 33.4,104.1 33.1,108.9 33.1,113.6 33.3,118.2 33.8,122.7 34.5,127.1 35.5,131.4 36.6,135.6 37.9,139.6 39.5,143.5 41.1,147.2 43.0,150.8 44.9,154.3 47.0,157.6 49.2,160.7 51.5,163.7 53.8,166.5 56.3,169.1 58.8,171.7 61.4,174.0 64.0,176.2 66.7,178.3 69.4,180.2 72.1,182.0 74.9,183.7 77.6,185.2 80.4,186.6 83.2,187.9 86.0,189.0M191.5,92.5 190.9,89.6 190.2,86.6 189.3,83.6 188.3,80.6 187.2,77.6 186.0,74.6 184.6,71.6 183.0,68.6 181.3,65.6 179.4,62.6 177.4,59.6 175.1,56.7 172.7,53.8 170.1,51.0 167.3,48.2 164.4,45.5 161.2,43.0 157.8,40.5 154.2,38.2 150.4,36.0 146.4,34.0 142.2,32.1 137.8,30.5 133.2,29.1 128.5,27.9 123.6,27.1 118.5,26.5 113.3,26.2 108.0,26.2 102.7,26.6 97.2,27.3 91.7,28.4 86.3,29.9 80.8,31.8 75.5,34.0 70.2,36.6 65.1,39.6 60.1,43.0 55.3,46.7 50.8,50.7 46.6,55.0 42.6,59.6 39.0,64.5 35.7,69.5 32.7,74.8 30.2,80.2 28.0,85.7 26.2,91.2 24.8,96.8 23.7,102.4 23.0,108.0 22.7,113.5 22.8,118.9 23.1,124.3 23.8,129.5 24.8,134.5 26.0,139.3 27.5,144.0 29.3,148.5 31.2,152.8 33.3,156.8 35.6,160.7 38.1,164.3 40.7,167.8 43.4,171.0 46.2,174.0 49.0,176.8 52.0,179.4 55.0,181.8 58.0,184.0 61.1,186.0 64.2,187.8 67.3,189.5 70.4,191.0 73.5,192.3 76.6,193.5 79.6,194.5 82.7,195.4 85.7,196.2 88.7,196.8 91.7,197.3 94.6,197.7M179.9,80.9 179.0,78.1 178.0,75.3 176.9,72.5 175.6,69.7 174.2,66.9 172.7,64.1 171.0,61.2 169.2,58.4 167.2,55.6 165.0,52.9 162.7,50.2 160.2,47.5 157.5,44.9 154.6,42.4 151.5,40.0 148.2,37.7 144.7,35.5 141.0,33.5 137.1,31.6 133.0,29.9 128.6,28.5 124.1,27.3 119.3,26.3 114.4,25.7 109.3,25.3 104.0,25.3 98.6,25.7 93.1,26.4 87.5,27.6 81.9,29.2 76.2,31.2 70.5,33.7 65.0,36.6 59.5,39.9 54.1,43.8 49.0,48.0 44.1,52.7 39.5,57.7 35.2,63.1 31.3,68.8 27.8,74.7 24.7,80.9 22.0,87.3 19.8,93.8 18.0,100.3 16.7,106.9 15.9,113.4 15.5,119.9 15.5,126.2 16.0,132.4 16.9,138.4 18.1,144.2 19.6,149.7 21.5,155.0 23.6,160.0 26.0,164.7 28.6,169.1 31.4,173.3 34.3,177.1 37.4,180.6 40.6,183.8 43.9,186.8 47.2,189.5 50.6,191.9 54.0,194.1 57.5,196.0 60.9,197.7 64.4,199.2 67.8,200.5 71.2,201.6 74.5,202.5 77.9,203.2 81.1,203.8 84.3,204.2 87.5,204.5 90.6,204.6 93.7,204.7 96.7,204.6 99.6,204.4 102.5,204.1 105.3,203.7M169.3,76.0 168.4,73.4 167.3,70.7 166.2,68.1 165.0,65.4 163.6,62.7 162.1,60.1 160.5,57.4 158.7,54.7 156.8,52.1 154.8,49.5 152.6,47.0 150.2,44.5 147.6,42.1 144.9,39.7 142.0,37.5 138.8,35.3 135.5,33.3 131.9,31.5 128.2,29.8 124.2,28.3 120.0,27.1 115.6,26.1 111.0,25.4 106.2,25.1 101.1,25.1 96.0,25.5 90.6,26.3 85.2,27.5 79.6,29.3 73.9,31.5 68.3,34.3 62.6,37.6 57.1,41.4 51.6,45.8 46.4,50.7 41.3,56.1 36.6,62.0 32.1,68.3 28.1,75.1 24.5,82.1 21.4,89.4 18.8,97.0 16.7,104.6 15.1,112.3 14.1,120.0 13.6,127.6 13.7,135.1 14.2,142.3 15.2,149.3 16.6,156.0 18.4,162.4 20.6,168.3 23.1,173.9 25.9,179.1 28.9,183.9 32.1,188.3 35.5,192.2 39.0,195.8 42.6,199.0 46.3,201.8 50.0,204.3 53.7,206.5 57.4,208.3 61.1,209.9 64.8,211.1 68.5,212.2 72.1,213.0 75.6,213.5 79.0,213.9 82.4,214.1 85.7,214.1 89.0,213.9 92.1,213.7 95.2,213.2 98.1,212.7 101.0,212.1 103.8,211.3 106.6,210.5 109.2,209.6 111.8,208.6 114.3,207.5M157.4,69.3 156.4,66.7 155.3,64.2 154.1,61.7 152.8,59.1 151.4,56.6 149.8,54.1 148.2,51.6 146.4,49.1 144.5,46.7 142.4,44.3 140.2,41.9 137.8,39.7 135.3,37.5 132.6,35.4 129.7,33.4 126.6,31.6 123.3,30.0 119.9,28.6 116.2,27.3 112.3,26.4 108.2,25.8 103.9,25.4 99.4,25.5 94.7,26.0 89.9,26.9 84.9,28.3 79.7,30.3 74.5,32.8 69.2,35.9 63.9,39.7 58.7,44.1 53.6,49.1 48.6,54.8 43.8,61.1 39.3,68.0 35.1,75.4 31.4,83.3 28.1,91.6 25.3,100.2 23.1,109.1 21.4,118.1 20.3,127.0 19.8,136.0 19.9,144.7 20.5,153.2 21.6,161.3 23.2,169.0 25.3,176.3 27.7,183.1 30.5,189.3 33.5,195.0 36.8,200.1 40.3,204.8 43.9,208.8 47.7,212.4 51.5,215.5 55.3,218.1 59.2,220.3 63.0,222.1 66.8,223.5 70.5,224.5 74.2,225.3 77.8,225.7 81.3,225.9 84.7,225.9 88.0,225.6 91.2,225.2 94.3,224.6 97.3,223.8 100.2,222.9 103.0,221.9 105.7,220.8 108.2,219.6 110.7,218.3 113.1,216.9 115.4,215.5 117.7,214.0 119.8,212.4 121.9,210.9 123.8,209.2M147.1,68.3 146.2,65.9 145.2,63.5 144.2,61.0 143.0,58.6 141.8,56.2 140.5,53.8 139.1,51.4 137.6,49.0 135.9,46.7 134.2,44.4 132.4,42.1 130.4,39.9 128.3,37.8 126.0,35.8 123.7,33.9 121.1,32.2 118.4,30.6 115.6,29.2 112.5,28.1 109.3,27.2 105.9,26.6 102.4,26.4 98.7,26.6 94.8,27.2 90.8,28.3 86.7,29.9 82.4,32.1 78.1,35.0 73.7,38.5 69.3,42.8 65.0,47.8 60.7,53.6 56.6,60.1 52.7,67.3 49.1,75.3 45.9,83.8 43.0,93.0 40.6,102.6 38.7,112.6 37.3,122.8 36.5,133.0 36.2,143.3 36.5,153.3 37.4,163.1 38.7,172.5 40.5,181.3 42.7,189.5 45.3,197.2 48.2,204.1 51.3,210.3 54.7,215.9 58.2,220.7 61.7,224.9 65.4,228.4 69.0,231.3 72.7,233.7 76.3,235.5 79.9,236.9 83.3,237.8 86.7,238.3 90.0,238.5 93.2,238.4 96.2,238.0 99.2,237.3 102.0,236.4 104.7,235.4 107.3,234.2 109.8,232.8 112.1,231.3 114.4,229.7 116.5,228.1 118.6,226.3 120.6,224.5 122.4,222.6 124.2,220.7 125.9,218.8 127.5,216.8 129.1,214.8 130.5,212.8 131.9,210.8M136.6,67.9 135.7,65.5 134.8,63.2 133.9,60.9 132.9,58.6 131.8,56.2 130.7,53.9 129.6,51.6 128.3,49.3 127.0,47.1 125.6,44.8 124.1,42.7 122.6,40.6 120.9,38.6 119.2,36.6 117.3,34.8 115.4,33.2 113.4,31.7 111.2,30.4 109.0,29.3 106.6,28.6 104.1,28.1 101.6,28.0 98.9,28.3 96.2,29.1 93.3,30.4 90.4,32.3 87.5,34.8 84.6,38.0 81.6,42.0 78.8,46.8 76.0,52.4 73.3,58.9 70.9,66.2 68.6,74.3 66.7,83.2 65.1,92.8 63.8,103.1 63.0,113.9 62.6,125.0 62.6,136.3 63.1,147.6 64.1,158.8 65.4,169.7 67.2,180.1 69.3,190.0 71.7,199.2 74.3,207.6 77.2,215.2 80.2,221.9 83.3,227.8 86.4,232.9 89.6,237.2 92.8,240.7 95.8,243.5 98.9,245.7 101.8,247.2 104.6,248.2 107.3,248.7 109.9,248.8 112.4,248.6 114.7,247.9 117.0,247.0 119.1,245.9 121.0,244.5 122.9,243.0 124.7,241.3 126.3,239.4 127.9,237.5 129.3,235.5 130.7,233.4 132.0,231.2 133.2,229.0 134.3,226.8 135.4,224.5 136.4,222.2 137.3,219.9 138.2,217.6 139.0,215.3 139.8,213.0 140.5,210.8M125.8,68.2 125.0,65.9 124.2,63.7 123.3,61.4 122.5,59.2 121.6,56.9 120.7,54.7 119.7,52.4 118.7,50.2 117.7,48.0 116.6,45.9 115.5,43.8 114.4,41.8 113.2,39.8 112.0,38.0 110.8,36.2 109.5,34.7 108.2,33.3 106.8,32.1 105.5,31.1 104.1,30.5 102.7,30.2 101.3,30.2 99.9,30.7 98.5,31.7 97.2,33.2 95.9,35.3 94.7,38.2 93.6,41.7 92.6,46.1 91.8,51.3 91.2,57.5 90.7,64.5 90.5,72.4 90.6,81.2 91.0,90.8 91.6,101.2 92.6,112.1 93.9,123.6 95.5,135.3 97.3,147.2 99.5,159.0 101.8,170.5 104.3,181.7 107.0,192.2 109.7,202.0 112.4,211.1 115.2,219.2 117.9,226.4 120.6,232.7 123.1,238.0 125.6,242.5 127.9,246.1 130.0,248.9 132.1,251.0 133.9,252.5 135.6,253.3 137.2,253.7 138.7,253.6 140.0,253.1 141.2,252.2 142.2,251.1 143.2,249.7 144.0,248.0 144.8,246.2 145.5,244.3 146.1,242.2 146.6,240.0 147.1,237.8 147.5,235.5 147.8,233.1 148.1,230.7 148.4,228.3 148.6,225.9 148.8,223.5 148.9,221.0 149.0,218.6 149.1,216.2 149.2,213.7 149.2,211.4 149.2,209.0M114.8,69.3 114.1,67.2 113.3,65.0 112.6,62.8 111.8,60.6 111.1,58.4 110.4,56.2 109.6,54.0 108.9,51.8 108.1,49.7 107.4,47.6 106.7,45.6 106.0,43.6 105.3,41.7 104.7,40.0 104.1,38.3 103.5,36.8 103.0,35.5 102.5,34.4 102.1,33.6 101.8,33.1 101.6,32.9 101.6,33.1 101.6,33.7 101.8,34.9 102.2,36.6 102.8,39.0 103.6,42.1 104.6,45.9 105.9,50.6 107.4,56.1 109.3,62.5 111.4,69.8 113.8,78.0 116.5,87.1 119.5,97.0 122.7,107.5 126.1,118.5 129.6,130.0 133.2,141.7 136.9,153.3 140.5,164.9 144.1,176.0 147.5,186.7 150.7,196.7 153.7,205.9 156.5,214.2 159.0,221.7 161.2,228.2 163.1,233.8 164.7,238.5 166.1,242.3 167.2,245.4 168.1,247.7 168.8,249.3 169.3,250.3 169.6,250.8 169.7,250.8 169.8,250.4 169.7,249.6 169.5,248.6 169.2,247.3 168.8,245.7 168.4,244.0 167.9,242.1 167.4,240.1 166.8,238.0 166.2,235.8 165.6,233.6 164.9,231.3 164.3,228.9 163.6,226.6 162.9,224.2 162.2,221.8 161.5,219.4 160.8,217.1 160.2,214.7 159.5,212.4 158.8,210.0 158.1,207.7M104.4,73.7 103.7,71.6 103.0,69.4 102.4,67.3 101.7,65.1 101.1,63.0 100.5,60.8 99.9,58.6 99.4,56.5 98.9,54.4 98.5,52.3 98.1,50.3 97.8,48.3 97.6,46.4 97.4,44.6 97.4,42.8 97.4,41.3 97.6,39.8 97.9,38.6 98.4,37.6 99.1,36.9 99.9,36.4 101.0,36.3 102.4,36.7 103.9,37.5 105.8,38.8 108.0,40.6 110.6,43.2 113.5,46.4 116.7,50.3 120.3,55.1 124.3,60.7 128.6,67.1 133.3,74.4 138.2,82.5 143.4,91.4 148.7,100.9 154.2,110.9 159.6,121.4 165.0,132.2 170.2,143.0 175.2,153.8 179.8,164.3 184.1,174.4 187.9,184.0 191.3,192.9 194.2,201.1 196.6,208.5 198.5,215.0 200.0,220.7 201.0,225.6 201.6,229.7 201.9,233.0 201.8,235.6 201.5,237.6 200.9,239.0 200.1,239.9 199.1,240.3 198.0,240.4 196.8,240.0 195.5,239.4 194.0,238.4 192.6,237.3 191.1,236.0 189.5,234.5 188.0,232.8 186.4,231.1 184.8,229.2 183.3,227.3 181.7,225.3 180.2,223.3 178.6,221.2 177.1,219.1 175.6,217.0 174.2,214.9 172.7,212.8 171.3,210.6 169.9,208.5 168.6,206.4 167.2,204.3M94.9,81.3 94.2,79.2 93.4,77.2 92.7,75.1 92.1,73.0 91.5,70.9 90.9,68.7 90.4,66.6 90.0,64.5 89.6,62.4 89.3,60.3 89.1,58.2 89.0,56.1 89.0,54.1 89.1,52.2 89.3,50.3 89.7,48.5 90.3,46.8 91.1,45.3 92.1,43.9 93.3,42.7 94.8,41.8 96.5,41.1 98.6,40.7 101.0,40.7 103.8,41.1 107.0,41.9 110.6,43.3 114.6,45.2 119.0,47.8 123.9,51.0 129.2,54.9 135.0,59.5 141.1,64.9 147.6,71.1 154.3,77.9 161.3,85.5 168.3,93.6 175.4,102.3 182.4,111.4 189.1,120.8 195.6,130.3 201.6,139.8 207.2,149.1 212.2,158.2 216.6,166.9 220.3,175.1 223.4,182.7 225.9,189.6 227.7,195.9 228.9,201.5 229.6,206.4 229.8,210.6 229.6,214.2 229.0,217.1 228.0,219.5 226.7,221.4 225.2,222.8 223.4,223.7 221.5,224.3 219.5,224.6 217.4,224.5 215.2,224.2 212.9,223.6 210.6,222.9 208.2,222.0 205.9,220.9 203.6,219.7 201.3,218.4 199.0,217.0 196.7,215.5 194.4,214.0 192.2,212.4 190.0,210.7 187.9,209.1 185.8,207.4 183.8,205.7 181.7,204.0 179.8,202.2 177.8,200.5 176.0,198.7M85.1,88.2 84.3,86.2 83.5,84.2 82.8,82.2 82.1,80.1 81.5,78.1 81.0,76.0 80.5,73.9 80.1,71.8 79.8,69.7 79.7,67.6 79.6,65.5 79.7,63.5 79.9,61.4 80.3,59.4 80.9,57.5 81.6,55.6 82.7,53.9 83.9,52.2 85.4,50.7 87.3,49.3 89.4,48.1 92.0,47.2 94.9,46.5 98.2,46.1 102.0,46.1 106.2,46.5 110.9,47.3 116.1,48.6 121.7,50.4 127.9,52.8 134.6,55.8 141.6,59.4 149.1,63.7 156.9,68.6 164.9,74.2 173.0,80.3 181.3,86.9 189.4,94.0 197.4,101.5 205.0,109.3 212.2,117.2 219.0,125.2 225.1,133.2 230.6,140.9 235.3,148.4 239.3,155.5 242.6,162.3 245.2,168.5 247.1,174.3 248.3,179.5 248.9,184.2 249.0,188.4 248.5,192.0 247.7,195.2 246.4,197.9 244.8,200.1 242.9,202.0 240.8,203.5 238.5,204.6 236.1,205.4 233.5,206.0 230.9,206.3 228.1,206.4 225.4,206.3 222.6,206.0 219.8,205.6 217.0,205.0 214.2,204.3 211.4,203.5 208.6,202.7 205.9,201.7 203.3,200.7 200.6,199.6 198.0,198.5 195.5,197.3 193.0,196.1 190.6,194.9 188.2,193.7 185.8,192.4M77.1,98.5 76.2,96.7 75.2,94.8 74.4,92.9 73.6,91.0 72.9,89.0 72.2,87.0 71.7,85.0 71.2,83.0 70.8,81.0 70.6,78.9 70.5,76.8 70.5,74.8 70.8,72.7 71.2,70.6 71.8,68.6 72.6,66.6 73.7,64.7 75.0,62.8 76.7,61.0 78.7,59.3 81.0,57.7 83.8,56.3 86.9,55.1 90.5,54.1 94.6,53.3 99.1,52.8 104.2,52.7 109.7,52.9 115.8,53.5 122.5,54.6 129.6,56.2 137.1,58.2 145.1,60.8 153.5,64.0 162.1,67.6 170.9,71.8 179.8,76.5 188.7,81.6 197.4,87.2 205.8,93.0 213.9,99.2 221.5,105.5 228.5,111.9 234.8,118.3 240.5,124.7 245.4,130.9 249.6,136.8 252.9,142.6 255.6,148.0 257.5,153.0 258.8,157.7 259.5,162.0 259.5,165.9 259.1,169.5 258.2,172.7 256.9,175.5 255.3,177.9 253.4,180.1 251.2,181.9 248.8,183.5 246.3,184.8 243.6,185.9 240.8,186.7 237.9,187.4 235.0,187.9 232.0,188.2 229.0,188.3 226.0,188.4 223.0,188.3 220.0,188.1 217.0,187.9 214.1,187.5 211.1,187.1 208.3,186.6 205.4,186.0 202.6,185.4 199.9,184.7 197.2,184.0 194.5,183.3M70.7,110.2 69.6,108.5 68.5,106.9 67.5,105.2 66.5,103.4 65.7,101.6 64.9,99.8 64.2,98.0 63.6,96.1 63.1,94.1 62.7,92.2 62.5,90.2 62.4,88.2 62.6,86.2 62.9,84.1 63.4,82.1 64.2,80.0 65.2,78.0 66.6,76.0 68.2,74.0 70.2,72.0 72.6,70.2 75.3,68.4 78.5,66.7 82.2,65.2 86.3,63.8 91.0,62.6 96.2,61.7 101.9,61.0 108.1,60.6 114.9,60.5 122.2,60.8 129.9,61.5 138.1,62.6 146.7,64.1 155.6,66.1 164.7,68.5 173.9,71.3 183.1,74.6 192.2,78.2 201.1,82.2 209.6,86.5 217.8,91.1 225.3,95.8 232.3,100.7 238.6,105.7 244.2,110.6 249.1,115.5 253.2,120.3 256.5,125.0 259.2,129.4 261.1,133.7 262.4,137.7 263.2,141.5 263.3,145.1 263.0,148.3 262.2,151.3 261.0,154.1 259.5,156.6 257.7,158.9 255.6,160.9 253.3,162.7 250.8,164.3 248.2,165.8 245.5,167.0 242.6,168.1 239.7,169.1 236.8,169.9 233.8,170.5 230.8,171.1 227.7,171.5 224.7,171.9 221.7,172.1 218.7,172.3 215.7,172.4 212.8,172.4 209.9,172.4 207.0,172.3 204.1,172.2 201.3,172.0M66.4,122.9 65.1,121.6 63.9,120.2 62.7,118.8 61.6,117.3 60.6,115.8 59.6,114.2 58.8,112.6 58.0,110.9 57.4,109.2 56.9,107.5 56.5,105.7 56.3,103.8 56.3,101.9 56.5,100.0 56.9,98.0 57.5,96.0 58.5,94.0 59.7,91.9 61.2,89.9 63.1,87.8 65.4,85.7 68.1,83.7 71.2,81.7 74.7,79.8 78.8,77.9 83.4,76.1 88.5,74.5 94.1,73.1 100.3,71.8 107.0,70.7 114.3,69.9 122.0,69.3 130.1,69.1 138.7,69.1 147.6,69.6 156.7,70.3 165.9,71.5 175.2,73.0 184.4,74.8 193.4,77.0 202.2,79.5 210.6,82.3 218.4,85.4 225.8,88.6 232.5,92.0 238.5,95.6 243.9,99.2 248.5,102.8 252.4,106.5 255.7,110.1 258.2,113.6 260.1,117.1 261.4,120.4 262.1,123.6 262.3,126.6 262.0,129.5 261.4,132.2 260.3,134.8 258.9,137.2 257.2,139.4 255.3,141.5 253.2,143.4 250.9,145.2 248.4,146.8 245.8,148.3 243.2,149.7 240.4,150.9 237.6,152.1 234.7,153.1 231.8,154.1 228.9,154.9 226.0,155.7 223.0,156.4 220.1,157.0 217.2,157.5 214.3,158.0 211.4,158.4 208.6,158.8 205.8,159.1M64.7,136.3 63.3,135.3 61.9,134.3 60.6,133.3 59.4,132.1 58.2,131.0 57.1,129.8 56.1,128.5 55.3,127.2 54.5,125.8 53.9,124.4 53.4,122.9 53.0,121.3 52.9,119.6 52.9,117.9 53.2,116.2 53.7,114.4 54.5,112.5 55.5,110.5 56.9,108.5 58.7,106.4 60.8,104.3 63.3,102.2 66.2,100.0 69.6,97.8 73.5,95.6 77.8,93.4 82.7,91.3 88.2,89.2 94.1,87.2 100.6,85.3 107.6,83.5 115.1,81.9 123.0,80.4 131.3,79.2 140.0,78.2 148.9,77.5 157.9,77.0 167.0,76.9 176.1,77.0 185.1,77.5 193.8,78.2 202.2,79.3 210.1,80.6 217.6,82.2 224.5,84.0 230.7,86.0 236.4,88.2 241.3,90.5 245.6,93.0 249.2,95.5 252.2,98.1 254.5,100.7 256.2,103.3 257.4,105.8 258.1,108.4 258.3,110.8 258.0,113.2 257.4,115.6 256.4,117.8 255.2,120.0 253.6,122.1 251.9,124.1 249.9,126.0 247.7,127.8 245.5,129.5 243.0,131.1 240.5,132.6 238.0,134.1 235.3,135.4 232.6,136.7 229.9,137.9 227.1,139.1 224.3,140.1 221.5,141.2 218.8,142.1 216.0,143.0 213.2,143.8 210.4,144.6 207.7,145.3M65.6,149.6 64.2,149.1 62.8,148.5 61.5,147.9 60.2,147.3 59.0,146.6 57.9,145.8 56.8,145.0 55.9,144.1 55.0,143.2 54.3,142.1 53.8,141.1 53.4,139.9 53.1,138.6 53.1,137.3 53.2,135.9 53.6,134.4 54.3,132.8 55.2,131.1 56.5,129.3 58.0,127.4 59.9,125.4 62.2,123.3 65.0,121.2 68.1,118.9 71.7,116.5 75.8,114.1 80.4,111.6 85.5,109.1 91.1,106.5 97.2,104.0 103.9,101.4 110.9,98.9 118.4,96.4 126.3,94.1 134.5,91.9 143.0,89.8 151.7,87.9 160.4,86.2 169.1,84.7 177.8,83.5 186.2,82.6 194.4,81.9 202.2,81.5 209.5,81.4 216.4,81.6 222.6,82.0 228.3,82.6 233.4,83.5 237.9,84.6 241.7,85.9 244.9,87.3 247.5,88.8 249.5,90.5 251.0,92.2 252.0,94.0 252.5,95.8 252.6,97.7 252.3,99.6 251.6,101.5 250.7,103.4 249.5,105.2 248.0,107.1 246.3,108.9 244.5,110.6 242.5,112.3 240.3,114.0 238.1,115.6 235.7,117.2 233.3,118.7 230.8,120.2 228.2,121.6 225.7,123.0 223.1,124.3 220.5,125.6 217.8,126.8 215.2,128.0 212.6,129.2 209.9,130.3 207.3,131.3M69.2,162.0 67.8,162.0 66.5,161.9 65.2,161.8 64.0,161.7 62.9,161.5 61.8,161.3 60.9,161.0 60.0,160.6 59.2,160.2 58.6,159.7 58.0,159.1 57.6,158.4 57.4,157.7 57.4,156.9 57.5,155.9 57.9,154.9 58.5,153.7 59.4,152.4 60.5,151.0 62.0,149.4 63.8,147.7 65.9,145.9 68.4,143.9 71.3,141.8 74.7,139.5 78.5,137.1 82.7,134.5 87.4,131.7 92.6,128.9 98.2,125.9 104.3,122.8 110.9,119.7 117.8,116.5 125.1,113.2 132.7,110.0 140.5,106.8 148.6,103.6 156.7,100.6 164.9,97.7 173.0,94.9 180.9,92.4 188.7,90.1 196.1,88.0 203.1,86.2 209.6,84.7 215.7,83.4 221.3,82.5 226.2,81.8 230.6,81.4 234.5,81.2 237.7,81.3 240.4,81.6 242.5,82.2 244.2,82.8 245.3,83.7 246.0,84.7 246.3,85.8 246.2,87.0 245.8,88.4 245.0,89.7 244.0,91.2 242.8,92.7 241.3,94.2 239.7,95.7 237.8,97.3 235.9,98.8 233.8,100.4 231.7,101.9 229.4,103.4 227.1,105.0 224.7,106.5 222.3,107.9 219.9,109.4 217.4,110.8 214.9,112.2 212.4,113.6 209.9,114.9 207.5,116.3 205.0,117.6M73.7,173.1 72.6,173.6 71.5,174.0 70.5,174.4 69.6,174.8 68.7,175.1 67.9,175.3 67.2,175.5 66.7,175.6 66.2,175.7 65.8,175.7 65.6,175.5 65.5,175.4 65.6,175.1 65.9,174.7 66.4,174.1 67.1,173.5 68.0,172.7 69.2,171.8 70.6,170.7 72.4,169.5 74.4,168.0 76.8,166.4 79.6,164.6 82.7,162.6 86.2,160.4 90.1,157.9 94.4,155.2 99.1,152.4 104.2,149.3 109.7,146.0 115.6,142.5 121.9,138.9 128.5,135.0 135.3,131.1 142.4,127.1 149.7,123.0 157.0,118.9 164.4,114.8 171.8,110.8 179.0,106.9 186.1,103.1 192.9,99.5 199.3,96.2 205.4,93.0 211.1,90.2 216.2,87.6 220.9,85.3 225.1,83.4 228.7,81.7 231.8,80.3 234.4,79.3 236.4,78.5 238.1,78.0 239.2,77.7 239.9,77.6 240.3,77.8 240.2,78.2 239.9,78.7 239.2,79.4 238.3,80.2 237.1,81.1 235.8,82.2 234.2,83.3 232.5,84.5 230.7,85.8 228.7,87.1 226.7,88.5 224.5,89.9 222.3,91.3 220.0,92.7 217.7,94.2 215.4,95.6 213.0,97.1 210.7,98.6 208.3,100.0 205.9,101.5 203.5,102.9 201.1,104.3" fill="none" stroke="#f00000" stroke-width="0.9"/><line x1="85.6" y1="183.8" x2="37.8" y2="225.9" stroke="#ff0000" stroke-width="1.8"/><line x1="195.3" y1="179.7" x2="227.7" y2="202.0" stroke="#00e000" stroke-width="1.6"/><g fill="#00e000"><circle cx="221.7" cy="90.3" r="1.7"/><circle cx="121.1" cy="211.8" r="1.7"/><circle cx="175.0" cy="63.0" r="1.7"/><circle cx="221.4" cy="72.2" r="1.7"/><circle cx="201.8" cy="184.7" r="1.7"/><circle cx="107.3" cy="45.4" r="1.7"/><circle cx="180.5" cy="50.1" r="1.7"/><circle cx="41.2" cy="147.4" r="1.7"/><circle cx="39.5" cy="57.7" r="1.7"/><circle cx="132.7" cy="35.5" r="1.7"/><circle cx="90.2" cy="238.5" r="1.7"/><circle cx="97.3" cy="147.2" r="1.7"/><circle cx="99.0" cy="36.9" r="1.7"/><circle cx="198.8" cy="216.9" r="1.7"/><circle cx="258.8" cy="157.7" r="1.7"/><circle cx="138.2" cy="69.1" r="1.7"/><circle cx="55.4" cy="143.6" r="1.7"/><circle cx="235.9" cy="98.8" r="1.7"/></g></svg></div></div></div></div></div><div class="win" style="left:218px;top:218px;width:197px;height:380px"><div class="fr1"><div class="fr2"><div class="nt" style="left:13px;top:-3px;width:1px;height:3px"></div><div class="nt" style="left:-3px;top:13px;width:3px;height:1px"></div><div class="title"><div class="tmenu"><i></i></div><span id="t52" class="tt" style="left:16px;letter-spacing:-0.526px">SaVi(0.5) : Fisheye</span></div><div class="content" style="height:355px"><div class="" style="left:-0.5px;top:0px;width:187.5px;height:186px;background:#000"><svg class="abs" style="left:0;top:0" width="187" height="186" viewBox="0 0 187 186"><rect width="187" height="186" fill="#000"/><circle cx="93.2" cy="93.5" r="92" fill="#fff"/><circle cx="93.2" cy="93.5" r="70.5" fill="none" stroke="#00e000" stroke-width="1"/><circle cx="93.2" cy="93.5" r="61" fill="none" stroke="#777" stroke-width="0.7"/><circle cx="93.2" cy="93.5" r="30.3" fill="none" stroke="#777" stroke-width="0.7"/><rect x="92.7" y="93.0" width="1" height="1" fill="#888"/><path d="M47.0,38.5h11M52.5,33.0v11M51.0,42.5h11M56.5,37.0v11M55.0,45.5h11M60.5,40.0v11M59.0,49.5h11M64.5,44.0v11M63.0,52.5h11M68.5,47.0v11M67.0,56.5h11M72.5,51.0v11M23.0,92.5h11M28.5,87.0v11M26.0,89.5h11M31.5,84.0v11M29.0,86.5h11M34.5,81.0v11M33.0,82.5h11M38.5,77.0v11M36.0,79.5h11M41.5,74.0v11M39.0,76.5h11M44.5,71.0v11M143.0,76.5h11M148.5,71.0v11M142.0,81.5h11M147.5,76.0v11M141.0,86.5h11M146.5,81.0v11M140.0,91.5h11M145.5,86.0v11M139.0,96.5h11M144.5,91.0v11M138.0,101.5h11M143.5,96.0v11M129.0,40.5h11M134.5,35.0v11M138.0,42.5h11M143.5,37.0v11M147.0,43.5h11M152.5,38.0v11M155.0,45.5h11M160.5,40.0v11" stroke="#ff1818" stroke-width="0.85" fill="none"/></svg></div><span id="t14" class="t " style="left:26.6px;transform:scaleY(1.1);top:190.6px;font-size:10px;letter-spacing:-0.062px;">Day 0&nbsp; 04:36:00.00</span><span id="t15" class="t " style="left:4px;transform:scaleY(1.1);top:207.1px;font-size:10px;letter-spacing:0.005px;">44 58.5290 N&nbsp; 93 16.6120 W</span><div class="chk" style="left:2.7px;top:230.5px;width:130.3px;height:16px;"></div><div class="ind on" style="left:6.7px;top:234.5px;width:8px;height:8px;"></div><span id="t16" class="t " style="left:19.7px;transform:scaleY(1.1);top:231.6px;font-size:10px;letter-spacing:-0.066px;">Show overhead satellites</span><div class="chk" style="left:2.7px;top:253px;width:130.3px;height:16px;"></div><div class="ind on" style="left:6.7px;top:257px;width:8px;height:8px;"></div><span id="t17" class="t " style="left:19.7px;transform:scaleY(1.1);top:254.1px;font-size:10px;letter-spacing:-0.069px;">Leave vapor trails</span><span id="t18" class="t " style="left:87px;transform:translateX(-50%) scaleY(1.1);top:278.3px;font-size:10px;letter-spacing:-0.173px;">Degrees</span><span id="t19" class="t " style="left:153.4px;transform:translateX(-50%) scaleY(1.1);top:278.3px;font-size:10px;letter-spacing:-0.202px;">Minutes</span><span id="t20" class="t " style="left:4.4px;transform:scaleY(1.1);top:294.6px;font-size:10px;letter-spacing:-0.012px;">Longitude:</span><span id="t21" class="t " style="left:10.4px;transform:scaleY(1.1);top:312.2px;font-size:10px;letter-spacing:0.001px;">Latitiude:</span><div class="entry" style="left:57.5px;top:293.5px;width:60px;height:16px;"></div><span id="t22" class="t " style="left:60.5px;transform:scaleY(1.1);top:295.4px;font-size:10px;letter-spacing:-0.050px;">−93</span><div class="entry" style="left:57.5px;top:311px;width:60px;height:16px;"></div><span id="t23" class="t " style="left:60.5px;transform:scaleY(1.1);top:312.9px;font-size:10px;letter-spacing:-0.050px;">44</span><div class="entry" style="left:123.5px;top:293.5px;width:60.5px;height:16px;"></div><span id="t24" class="t " style="left:126.5px;transform:scaleY(1.1);top:295.4px;font-size:10px;letter-spacing:-0.050px;">16.612</span><div class="entry" style="left:123.5px;top:311px;width:60.5px;height:16px;"></div><span id="t25" class="t " style="left:126.5px;transform:scaleY(1.1);top:312.9px;font-size:10px;letter-spacing:-0.050px;">58.529</span><div class="sep" style="left:0px;top:329px;width:187.5px;height:1.5px;"></div><div class="btn" style="left:2.5px;top:333px;width:41.5px;height:19.5px;"></div><span id="t26" class="t " style="left:23.25px;transform:translateX(-50%) scaleY(1.1);top:335.85px;font-size:10px;letter-spacing:-0.143px;">Apply</span><div class="btn" style="left:132.3px;top:333px;width:51.7px;height:19.5px;"></div><span id="t27" class="t " style="left:158.15px;transform:translateX(-50%) scaleY(1.1);top:335.85px;font-size:10px;letter-spacing:-0.071px;">Dismiss</span></div></div></div></div><div class="win" style="left:320px;top:3px;width:435px;height:274px"><div class="fr1"><div class="fr2"><div class="nt" style="left:13px;top:-3px;width:1px;height:3px"></div><div class="nt" style="left:-3px;top:13px;width:3px;height:1px"></div><div class="title"><div class="tmenu"><i></i></div><span id="t53" class="tt" style="left:22px;letter-spacing:-0.597px">SaVi(0.5) by The Geometry Center</span><div class="tbtn min"><i></i></div><div class="tbtn max"><i></i></div></div><div class="content" style="height:249px"><span id="t28" class="t " style="left:7.7px;transform:scaleY(1.1);top:4.6px;font-size:10px;letter-spacing:-0.331px;"><u>F</u>ile</span><span id="t29" class="t " style="left:36.6px;transform:scaleY(1.1);top:4.6px;font-size:10px;letter-spacing:-0.010px;"><u>O</u>ptions</span><span id="t30" class="t " style="left:84.6px;transform:scaleY(1.1);top:4.6px;font-size:10px;letter-spacing:-0.263px;"><u>P</u>anels</span><span id="t31" class="t " style="left:127.9px;transform:scaleY(1.1);top:4.6px;font-size:10px;letter-spacing:-0.088px;"><u>C</u>onstellations</span><div class="sep" style="left:0px;top:23px;width:425px;height:1.5px;"></div><span id="t32" class="t " style="left:5px;transform:scaleY(1.1);top:29.2px;font-size:10px;letter-spacing:-0.084px;">Day 0&nbsp; 04:36:00.00</span><span id="t33" class="t " style="left:5px;transform:scaleY(1.1);top:50.6px;font-size:10px;letter-spacing:0.040px;">Time step (secs):</span><div class="entry" style="left:88.5px;top:49px;width:132.5px;height:17px;"></div><span id="t34" class="t " style="left:91.5px;transform:scaleY(1.1);top:50.9px;font-size:10px;letter-spacing:-0.050px;">60.0</span><span id="t35" class="t " style="left:4px;transform:scaleY(1.1);top:68.6px;font-size:10px;letter-spacing:-0.102px;">semi−major axis</span><span id="t36" class="t " style="left:90.5px;transform:scaleY(1.1);top:68.6px;font-size:10px;letter-spacing:-0.018px;">eccentricity</span><span id="t37" class="t " style="left:161px;transform:scaleY(1.1);top:68.6px;font-size:10px;letter-spacing:-0.226px;">inclination</span><span id="t38" class="t " style="left:218px;transform:scaleY(1.1);top:68.6px;font-size:10px;letter-spacing:-0.145px;">long.asc.node</span><span id="t39" class="t " style="left:294.4px;transform:scaleY(1.1);top:68.6px;font-size:10px;letter-spacing:-0.256px;">arg.periap.</span><span id="t40" class="t " style="left:358.4px;transform:scaleY(1.1);top:68.6px;font-size:10px;letter-spacing:-0.104px;">time.periap.</span><div class="entry" style="left:2px;top:83.5px;width:407.5px;height:114.5px;"></div><div class="row" style="left:2px;top:85.30px;width:407.5px"><span style="right:345.5px">8059.00</span><span style="right:278.5px">0.1651</span><span style="right:212.5px">63.435</span><span style="right:143.5px">0.000</span><span style="right:76px">-45.000</span><span style="right:9.5px">0.00</span></div><div class="row" style="left:2px;top:96.37px;width:407.5px"><span style="right:345.5px">8059.00</span><span style="right:278.5px">0.1651</span><span style="right:212.5px">63.435</span><span style="right:143.5px">12.000</span><span style="right:76px">-45.000</span><span style="right:9.5px">-2880.00</span></div><div class="row" style="left:2px;top:107.44px;width:407.5px"><span style="right:345.5px">8059.00</span><span style="right:278.5px">0.1651</span><span style="right:212.5px">63.435</span><span style="right:143.5px">24.000</span><span style="right:76px">-45.000</span><span style="right:9.5px">-5760.00</span></div><div class="row" style="left:2px;top:118.51px;width:407.5px"><span style="right:345.5px">8059.00</span><span style="right:278.5px">0.1651</span><span style="right:212.5px">63.435</span><span style="right:143.5px">36.000</span><span style="right:76px">-45.000</span><span style="right:9.5px">-8640.00</span></div><div class="row" style="left:2px;top:129.58px;width:407.5px"><span style="right:345.5px">8059.00</span><span style="right:278.5px">0.1651</span><span style="right:212.5px">63.435</span><span style="right:143.5px">48.000</span><span style="right:76px">-45.000</span><span style="right:9.5px">-11520.00</span></div><div class="row" style="left:2px;top:140.65px;width:407.5px"><span style="right:345.5px">8059.00</span><span style="right:278.5px">0.1651</span><span style="right:212.5px">63.435</span><span style="right:143.5px">60.000</span><span style="right:76px">-45.000</span><span style="right:9.5px">-14400.00</span></div><div class="row" style="left:2px;top:151.72px;width:407.5px"><span style="right:345.5px">8059.00</span><span style="right:278.5px">0.1651</span><span style="right:212.5px">63.435</span><span style="right:143.5px">72.000</span><span style="right:76px">-45.000</span><span style="right:9.5px">-17280.00</span></div><div class="row" style="left:2px;top:162.79px;width:407.5px"><span style="right:345.5px">8059.00</span><span style="right:278.5px">0.1651</span><span style="right:212.5px">63.435</span><span style="right:143.5px">84.000</span><span style="right:76px">-45.000</span><span style="right:9.5px">-20160.00</span></div><div class="row" style="left:2px;top:173.86px;width:407.5px"><span style="right:345.5px">8059.00</span><span style="right:278.5px">0.1651</span><span style="right:212.5px">63.435</span><span style="right:143.5px">96.000</span><span style="right:76px">-45.000</span><span style="right:9.5px">-23040.00</span></div><div class="row" style="left:2px;top:184.93px;width:407.5px"><span style="right:345.5px">8059.00</span><span style="right:278.5px">0.1651</span><span style="right:212.5px">63.435</span><span style="right:143.5px">108.000</span><span style="right:76px">-45.000</span><span style="right:9.5px">-25920.00</span></div><div class="trough" style="left:411px;top:83.5px;width:13px;height:114.5px;"><div class="arr up"></div><div class="thumb"></div><div class="arr dn"></div></div><div class="btn" style="left:3px;top:201.5px;width:38.5px;height:19.5px;"></div><span id="t41" class="t " style="left:22.25px;transform:translateX(-50%) scaleY(1.1);top:203.85px;font-size:10px;letter-spacing:-0.405px;">New</span><div class="btn" style="left:45.5px;top:201.5px;width:40.5px;height:19.5px;"></div><span id="t42" class="t " style="left:65.75px;transform:translateX(-50%) scaleY(1.1);top:203.85px;font-size:10px;letter-spacing:-0.265px;">Copy</span><div class="btn" style="left:90.5px;top:201.5px;width:46.5px;height:19.5px;"></div><span id="t43" class="t " style="left:113.75px;transform:translateX(-50%) scaleY(1.1);top:203.85px;font-size:10px;letter-spacing:-0.101px;">Delete</span><div class="btn" style="left:3px;top:226.5px;width:44.5px;height:20px;"></div><span id="t44" class="t " style="left:25.25px;transform:translateX(-50%) scaleY(1.1);top:229.1px;font-size:10px;letter-spacing:-0.145px;">Reset</span><div class="btn" style="left:52px;top:226.5px;width:45.5px;height:20px;"></div><span id="t45" class="t " style="left:74.75px;transform:translateX(-50%) scaleY(1.1);top:229.1px;font-size:10px;letter-spacing:-0.005px;">&lt; step</span><div class="btn" style="left:102px;top:226.5px;width:54px;height:20px;"></div><span id="t46" class="t " style="left:129px;transform:translateX(-50%) scaleY(1.1);top:229.1px;font-size:10px;letter-spacing:0.276px;">&lt;&lt;&lt;&lt;&lt;&lt;</span><div class="btn" style="left:160.5px;top:226.5px;width:44.5px;height:20px;"></div><span id="t47" class="t " style="left:182.75px;transform:translateX(-50%) scaleY(1.1);top:229.1px;font-size:10px;letter-spacing:-0.112px;">STOP</span><div class="btn" style="left:209.5px;top:226.5px;width:54px;height:20px;"></div><span id="t48" class="t " style="left:236.5px;transform:translateX(-50%) scaleY(1.1);top:229.1px;font-size:10px;letter-spacing:0.092px;">&gt;&gt;&gt;&gt;&gt;&gt;</span><div class="btn" style="left:268px;top:226.5px;width:46px;height:20px;"></div><span id="t49" class="t " style="left:291px;transform:translateX(-50%) scaleY(1.1);top:229.1px;font-size:10px;letter-spacing:0.161px;">step &gt;</span></div></div></div></div><div class="gc">The Geometry Center</div></body></html>
